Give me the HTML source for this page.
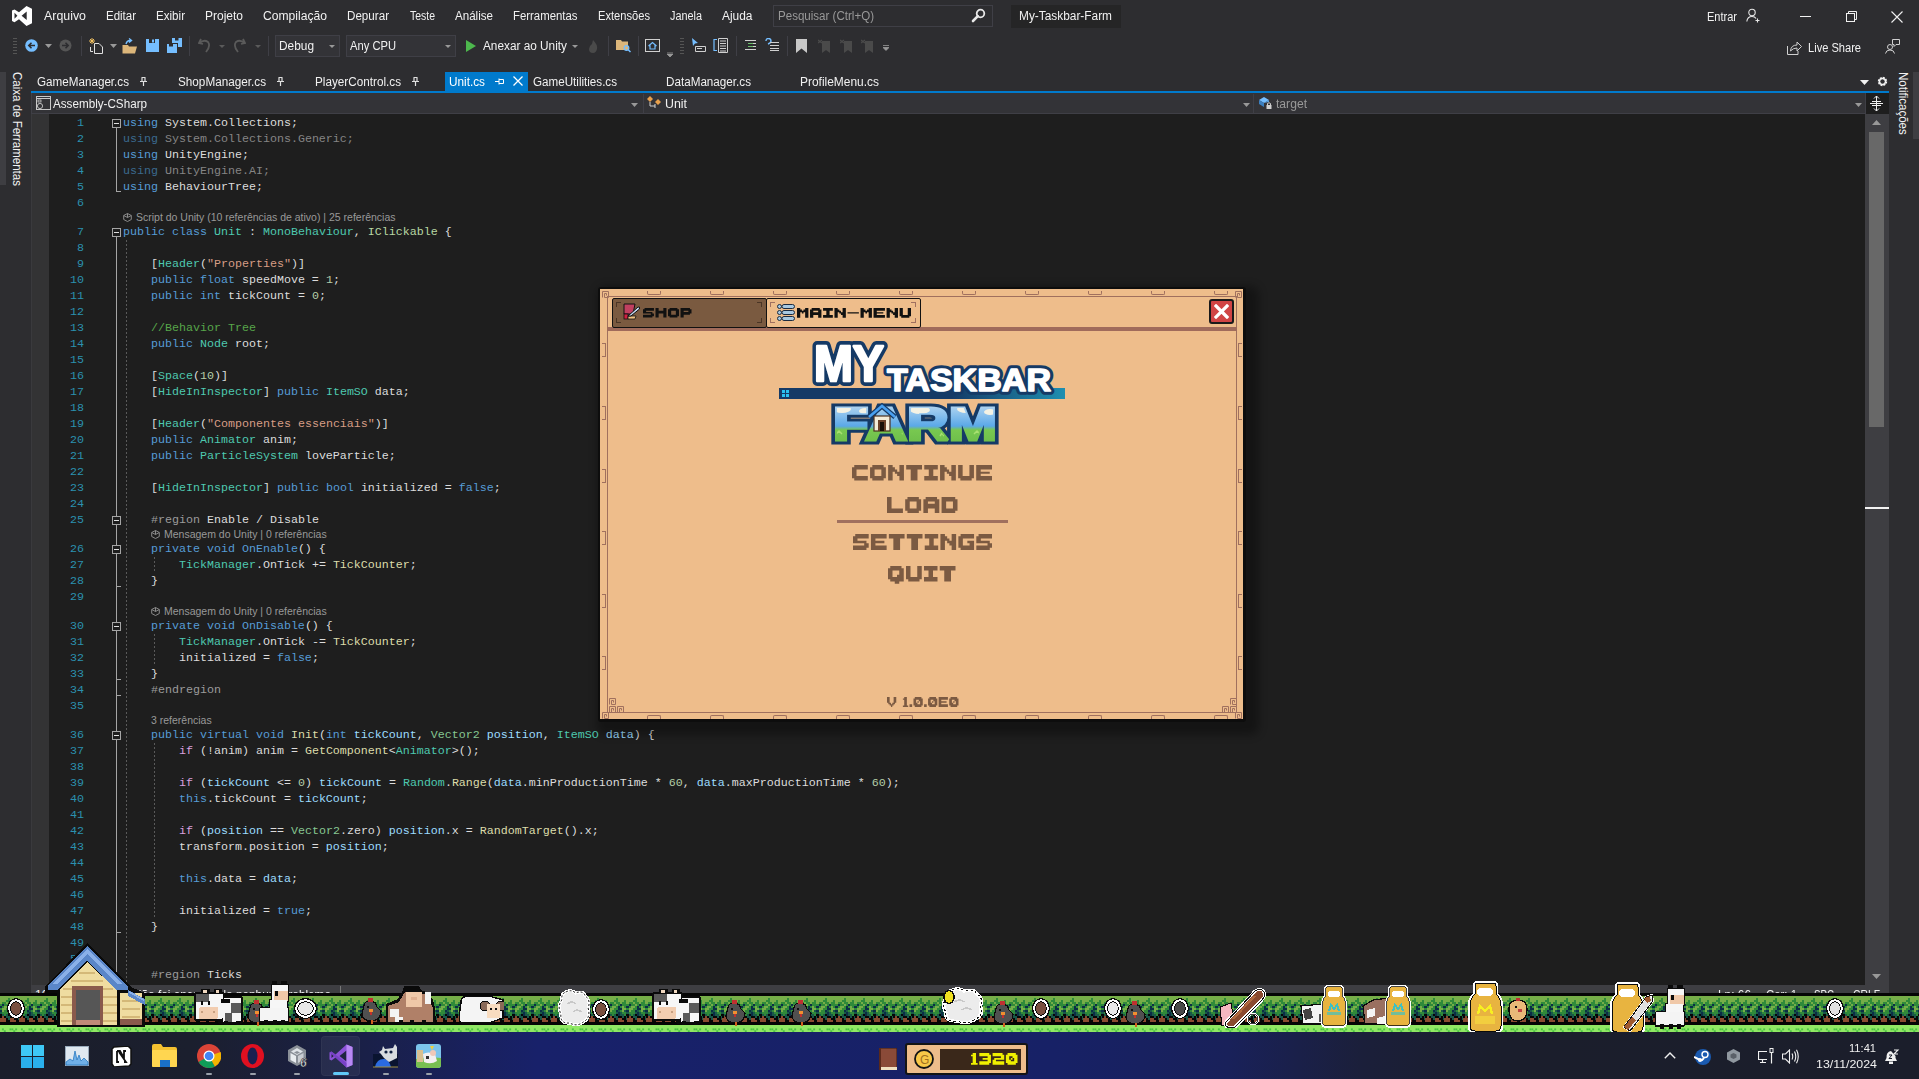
<!DOCTYPE html><html><head><meta charset="utf-8"><style>
*{margin:0;padding:0;box-sizing:border-box}
html,body{width:1919px;height:1079px;overflow:hidden;background:#2d2d30;font-family:"Liberation Sans",sans-serif;position:relative}
.abs{position:absolute}
.t{position:absolute;white-space:nowrap;font-family:"Liberation Sans",sans-serif}
.ln{position:absolute;left:49px;width:35px;text-align:right;color:#2b91af;font:11.67px/16px "Liberation Mono",monospace;height:16px}
.cl{position:absolute;left:123px;font:11.67px/16px "Liberation Mono",monospace;white-space:pre;height:16px}
</style></head><body>
<div class="abs" style="left:0px;top:0px;width:1919px;height:62px;background:#2d2d30;"></div>
<svg class="abs" style="left:0;top:0" width="40" height="32" viewBox="0 0 40 32"><path d="M26.5 6 L32 8.7 V23.3 L26.5 26 L19 19.3 L14.5 22.2 L12 21 V10.6 L14.5 9.4 L19 12.2 Z M14.5 12.8 V18.8 L17.4 15.8 Z M26.7 11.6 V20 L21.6 15.8 Z" fill="#fff" fill-rule="evenodd"/></svg>
<div class="t" style="left:44px;top:9.84px;font-size:12px;line-height:12px;color:#f1f1f1;transform:scaleX(1.0322);transform-origin:0 0;">Arquivo</div>
<div class="t" style="left:106px;top:9.84px;font-size:12px;line-height:12px;color:#f1f1f1;transform:scaleX(0.9570);transform-origin:0 0;">Editar</div>
<div class="t" style="left:156px;top:9.84px;font-size:12px;line-height:12px;color:#f1f1f1;transform:scaleX(0.9664);transform-origin:0 0;">Exibir</div>
<div class="t" style="left:205px;top:9.84px;font-size:12px;line-height:12px;color:#f1f1f1;transform:scaleX(0.9994);transform-origin:0 0;">Projeto</div>
<div class="t" style="left:263px;top:9.84px;font-size:12px;line-height:12px;color:#f1f1f1;transform:scaleX(1.0100);transform-origin:0 0;">Compilação</div>
<div class="t" style="left:347px;top:9.84px;font-size:12px;line-height:12px;color:#f1f1f1;transform:scaleX(0.9687);transform-origin:0 0;">Depurar</div>
<div class="t" style="left:410px;top:9.84px;font-size:12px;line-height:12px;color:#f1f1f1;transform:scaleX(0.8716);transform-origin:0 0;">Teste</div>
<div class="t" style="left:455px;top:9.84px;font-size:12px;line-height:12px;color:#f1f1f1;transform:scaleX(0.9655);transform-origin:0 0;">Análise</div>
<div class="t" style="left:513px;top:9.84px;font-size:12px;line-height:12px;color:#f1f1f1;transform:scaleX(0.9482);transform-origin:0 0;">Ferramentas</div>
<div class="t" style="left:598px;top:9.84px;font-size:12px;line-height:12px;color:#f1f1f1;transform:scaleX(0.9280);transform-origin:0 0;">Extensões</div>
<div class="t" style="left:670px;top:9.84px;font-size:12px;line-height:12px;color:#f1f1f1;transform:scaleX(0.9049);transform-origin:0 0;">Janela</div>
<div class="t" style="left:722px;top:9.84px;font-size:12px;line-height:12px;color:#f1f1f1;transform:scaleX(0.9937);transform-origin:0 0;">Ajuda</div>
<div class="abs" style="left:773px;top:5px;width:220px;height:22px;background:#2d2d30;border:1px solid #3f3f46;"></div>
<div class="t" style="left:778px;top:9.84px;font-size:12px;line-height:12px;color:#999999;transform:scaleX(0.9629);transform-origin:0 0;">Pesquisar (Ctrl+Q)</div>
<svg class="abs" style="left:971px;top:8px" width="15" height="15" viewBox="0 0 15 15"><circle cx="9.5" cy="5.5" r="3.8" fill="none" stroke="#e8e8e8" stroke-width="1.8"/><path d="M6.8 8.2 L2 13" stroke="#e8e8e8" stroke-width="2.6" stroke-linecap="round"/></svg>
<div class="abs" style="left:1011px;top:5px;width:110px;height:23px;background:#252526;"></div>
<div class="t" style="left:1019px;top:9.84px;font-size:12px;line-height:12px;color:#f1f1f1;transform:scaleX(0.9893);transform-origin:0 0;">My-Taskbar-Farm</div>
<div class="t" style="left:1707px;top:10.84px;font-size:12px;line-height:12px;color:#f1f1f1;transform:scaleX(0.9180);transform-origin:0 0;">Entrar</div>
<svg class="abs" style="left:1746px;top:8px" width="15" height="15" viewBox="0 0 15 15"><circle cx="6" cy="4.5" r="3.2" fill="none" stroke="#e8e8e8" stroke-width="1.1"/><path d="M0.8 13.5 Q1.5 8.5 6 8.5 Q9 8.5 10 10.5" fill="none" stroke="#e8e8e8" stroke-width="1.1"/><path d="M11.5 10.5 V14.5 M9.5 12.5 H13.5" stroke="#e8e8e8" stroke-width="1.1"/></svg>
<div class="abs" style="left:1800px;top:16px;width:11px;height:1px;background:#f1f1f1;"></div>
<svg class="abs" style="left:1846px;top:11px" width="12" height="12" viewBox="0 0 12 12"><rect x="0.5" y="2.5" width="8" height="8" fill="none" stroke="#f1f1f1"/><path d="M2.5 2.5 V0.5 H10.5 V8.5 H8.5" fill="none" stroke="#f1f1f1"/></svg>
<svg class="abs" style="left:1891px;top:11px" width="12" height="12" viewBox="0 0 12 12"><path d="M0.5 0.5 L11.5 11.5 M11.5 0.5 L0.5 11.5" stroke="#f1f1f1" stroke-width="1.1"/></svg>
<div class="abs" style="left:13px;top:37px;width:4px;height:17px;background-image:radial-gradient(#555 0.7px,transparent 0.8px);background-size:2px 3px"></div>
<svg class="abs" style="left:25px;top:39px" width="13" height="13" viewBox="0 0 13 13"><circle cx="6.5" cy="6.5" r="6.3" fill="#75beff"/><path d="M10 6.5 H4 M6.5 3.8 L3.8 6.5 L6.5 9.2" fill="none" stroke="#2d2d30" stroke-width="1.6"/></svg>
<svg class="abs" style="left:45px;top:44px" width="7" height="4"><path d="M0 0 H7 L3.5 4Z" fill="#999"/></svg>
<svg class="abs" style="left:59px;top:39px" width="13" height="13" viewBox="0 0 13 13"><circle cx="6.5" cy="6.5" r="6" fill="#555"/><path d="M3 6.5 H9 M6.5 3.8 L9.2 6.5 L6.5 9.2" fill="none" stroke="#2d2d30" stroke-width="1.6"/></svg>
<div class="abs" style="left:81px;top:36px;width:1px;height:20px;background:#3f3f46;"></div>
<svg class="abs" style="left:89px;top:38px" width="15" height="16" viewBox="0 0 15 16"><path d="M3 0 V6 M0 3 H6 M1 1 L5 5 M5 1 L1 5" stroke="#f0c060" stroke-width="1"/><path d="M5.5 5.5 H10 L13.5 9 V15.5 H5.5 Z" fill="none" stroke="#e0e0e0"/><path d="M1.5 9 V13.5 H4" fill="none" stroke="#e0e0e0"/></svg>
<svg class="abs" style="left:110px;top:44px" width="7" height="4"><path d="M0 0 H7 L3.5 4Z" fill="#999"/></svg>
<svg class="abs" style="left:122px;top:38px" width="16" height="16" viewBox="0 0 16 16"><path d="M0.5 7 H6 L7 8.5 H15 L13 15.5 H0.5 Z" fill="#dcb67a"/><path d="M4 6 Q5 2 9 2.5 M7 0.5 L9.5 2.5 L7 4.5" fill="none" stroke="#75beff" stroke-width="1.4"/></svg>
<svg class="abs" style="left:146px;top:39px" width="13" height="13" viewBox="0 0 13 13"><path d="M0 0 H13 V13 H0Z" fill="#75beff"/><rect x="3" y="0" width="6" height="4" fill="#2d2d30"/><rect x="6" y="0.5" width="2" height="3" fill="#75beff"/></svg>
<svg class="abs" style="left:167px;top:38px" width="15" height="15" viewBox="0 0 15 15"><path d="M5 0 H15 V9 H11 V5 H5Z" fill="#75beff"/><path d="M0 6 H10 V15 H0Z" fill="#75beff"/><rect x="2" y="6" width="4" height="2.5" fill="#2d2d30"/><rect x="8" y="0" width="3.5" height="2.5" fill="#2d2d30"/></svg>
<div class="abs" style="left:189px;top:36px;width:1px;height:20px;background:#3f3f46;"></div>
<svg class="abs" style="left:198px;top:38px" width="13" height="15" viewBox="0 0 13 15"><path d="M3 1 L1 5 L5 6 M1.5 5 Q6 1 10 4 Q13 8 8 14" fill="none" stroke="#5a5a5a" stroke-width="1.8"/></svg>
<svg class="abs" style="left:219px;top:45px" width="6" height="3"><path d="M0 0 H6 L3 3Z" fill="#5a5a5a"/></svg>
<svg class="abs" style="left:233px;top:38px" width="13" height="15" viewBox="0 0 13 15"><path d="M10 1 L12 5 L8 6 M11.5 5 Q7 1 3 4 Q0 8 5 14" fill="none" stroke="#5a5a5a" stroke-width="1.8"/></svg>
<svg class="abs" style="left:255px;top:45px" width="6" height="3"><path d="M0 0 H6 L3 3Z" fill="#5a5a5a"/></svg>
<div class="abs" style="left:268px;top:36px;width:1px;height:20px;background:#3f3f46;"></div>
<div class="abs" style="left:275px;top:35px;width:65px;height:22px;background:#333337;border:1px solid #3f3f46;"></div>
<div class="t" style="left:279px;top:39.84px;font-size:12px;line-height:12px;color:#f1f1f1;transform:scaleX(0.9897);transform-origin:0 0;">Debug</div>
<svg class="abs" style="left:329px;top:45px" width="6" height="3"><path d="M0 0 H6 L3 3Z" fill="#999"/></svg>
<div class="abs" style="left:346px;top:35px;width:110px;height:22px;background:#333337;border:1px solid #3f3f46;"></div>
<div class="t" style="left:350px;top:39.84px;font-size:12px;line-height:12px;color:#f1f1f1;transform:scaleX(0.9321);transform-origin:0 0;">Any CPU</div>
<svg class="abs" style="left:445px;top:45px" width="6" height="3"><path d="M0 0 H6 L3 3Z" fill="#999"/></svg>
<svg class="abs" style="left:466px;top:40px" width="10" height="12"><path d="M0 0 L10 6 L0 12Z" fill="#4db84d"/></svg>
<div class="t" style="left:483px;top:39.84px;font-size:12px;line-height:12px;color:#f1f1f1;transform:scaleX(0.9838);transform-origin:0 0;">Anexar ao Unity</div>
<svg class="abs" style="left:572px;top:45px" width="6" height="3"><path d="M0 0 H6 L3 3Z" fill="#999"/></svg>
<svg class="abs" style="left:588px;top:40px" width="10" height="13"><path d="M5 0 Q10 5 9 9 Q8 13 5 13 Q1 13 1 9 Q1 6 4 4Z" fill="#4a4a4a"/></svg>
<div class="abs" style="left:608px;top:36px;width:1px;height:20px;background:#3f3f46;"></div>
<svg class="abs" style="left:616px;top:39px" width="15" height="14" viewBox="0 0 15 14"><path d="M0 1 H5 L6 2.5 H12 V11 H0Z" fill="#dcb67a"/><circle cx="10.5" cy="9" r="2.3" fill="none" stroke="#75beff" stroke-width="1.3"/><path d="M12 10.5 L14.5 13" stroke="#75beff" stroke-width="1.5"/></svg>
<div class="abs" style="left:638px;top:36px;width:1px;height:20px;background:#3f3f46;"></div>
<svg class="abs" style="left:645px;top:39px" width="15" height="13" viewBox="0 0 15 13"><rect x="0.5" y="0.5" width="14" height="12" fill="none" stroke="#d0d0d0"/><path d="M3.5 7 L7.5 3.5 L11.5 7 M5 6 V10 H10 V6" fill="none" stroke="#75beff" stroke-width="1.2"/></svg>
<svg class="abs" style="left:667px;top:52px" width="6" height="5"><path d="M0 0 H6 M0 2 H6 L3 5Z" stroke="#999" fill="#999" stroke-width="0.8"/></svg>
<div class="abs" style="left:680px;top:37px;width:4px;height:17px;background-image:radial-gradient(#555 0.7px,transparent 0.8px);background-size:2px 3px"></div>
<svg class="abs" style="left:692px;top:38px" width="14" height="15" viewBox="0 0 14 15"><path d="M0 0 L6 5 L3 5.5 L1 8Z" fill="#75beff"/><path d="M3.5 8.5 H13.5 V13.5 H3.5 Z M5 10.5 H10" fill="none" stroke="#d0d0d0"/></svg>
<svg class="abs" style="left:713px;top:38px" width="15" height="15" viewBox="0 0 15 15"><path d="M4 1.5 H1 V12.5 H4" fill="none" stroke="#75beff" stroke-width="1.2"/><path d="M5.5 0.5 H14.5 V14.5 H5.5Z M7 3 H13 M7 5.5 H13 M7 8 H13 M7 10.5 H13 M7 13 H13" fill="none" stroke="#d0d0d0" stroke-width="1"/></svg>
<div class="abs" style="left:736px;top:36px;width:1px;height:20px;background:#3f3f46;"></div>
<svg class="abs" style="left:745px;top:40px" width="11" height="11" viewBox="0 0 11 11"><path d="M0 0.5 H11 M3 3.5 H11 M3 6.5 H11 M0 9.5 H11" stroke="#d0d0d0"/><path d="M3 3.5 H8 M3 6.5 H8" stroke="#6cc06c"/></svg>
<svg class="abs" style="left:765px;top:38px" width="14" height="13" viewBox="0 0 14 13"><path d="M1 3 Q1 0.5 3.5 0.5 Q6 0.5 6 3 Q6 5 3 6" fill="none" stroke="#75beff" stroke-width="1.4"/><path d="M5 4.5 H14 M5 7.5 H14 M5 10.5 H14 M5 12.5 H14" stroke="#d0d0d0"/></svg>
<div class="abs" style="left:787px;top:36px;width:1px;height:20px;background:#3f3f46;"></div>
<svg class="abs" style="left:796px;top:39px" width="11" height="14"><path d="M0 0 H11 V14 L5.5 9.5 L0 14Z" fill="#c8c8c8"/></svg>
<svg class="abs" style="left:818px;top:38px" width="12" height="15"><path d="M4 3 H12 V15 L8 12 L4 15Z" fill="#4a4a4a"/><path d="M0 2 L4 5 M0 5 L4 2" stroke="#4a4a4a" stroke-width="1.4"/></svg>
<svg class="abs" style="left:840px;top:38px" width="12" height="15"><path d="M4 3 H12 V15 L8 12 L4 15Z" fill="#4a4a4a"/><path d="M0 2 L4 5 M0 5 L4 2" stroke="#4a4a4a" stroke-width="1.4"/></svg>
<svg class="abs" style="left:861px;top:38px" width="12" height="15"><path d="M4 3 H12 V15 L8 12 L4 15Z" fill="#4a4a4a"/><path d="M0 2 L4 5 M0 5 L4 2" stroke="#4a4a4a" stroke-width="1.4"/></svg>
<svg class="abs" style="left:883px;top:45px" width="6" height="6"><path d="M0 0.5 H6 M0 2.5 H6 L3 5.5Z" stroke="#999" fill="#999" stroke-width="0.8"/></svg>
<svg class="abs" style="left:1787px;top:41px" width="15" height="14" viewBox="0 0 15 14"><path d="M0.5 5 V13.5 H11 V10" fill="none" stroke="#d0d0d0"/><path d="M3.5 10 Q4 4 10 4 V1 L14.5 5.5 L10 10 V7 Q6 7 3.5 10Z" fill="none" stroke="#d0d0d0"/></svg>
<div class="t" style="left:1808px;top:41.84px;font-size:12px;line-height:12px;color:#f1f1f1;transform:scaleX(0.9238);transform-origin:0 0;">Live Share</div>
<svg class="abs" style="left:1885px;top:39px" width="15" height="15" viewBox="0 0 15 15"><circle cx="5" cy="8" r="2.5" fill="none" stroke="#d0d0d0"/><path d="M0.5 14.5 Q1 11 5 11 Q9 11 9.5 14.5" fill="none" stroke="#d0d0d0"/><path d="M7.5 0.5 H14.5 V5.5 H11 L9 7.5 V5.5 H7.5Z" fill="none" stroke="#d0d0d0"/></svg>
<div class="abs" style="left:0px;top:62px;width:31px;height:923px;background:#2d2d30;"></div>
<div class="abs" style="left:0px;top:72px;width:6px;height:113px;background:#3e3e42;"></div>
<div class="t" style="left:23px;top:72px;font-size:12px;line-height:12px;color:#f1f1f1;transform:rotate(90deg) scaleX(0.96);transform-origin:0 0;">Caixa de Ferramentas</div>
<div class="abs" style="left:1889px;top:62px;width:30px;height:923px;background:#2d2d30;"></div>
<div class="abs" style="left:1913px;top:72px;width:6px;height:67px;background:#3e3e42;"></div>
<div class="t" style="left:1909px;top:72px;font-size:12px;line-height:12px;color:#f1f1f1;transform:rotate(90deg) scaleX(0.96);transform-origin:0 0;">Notificações</div>
<div class="t" style="left:37px;top:75.84px;font-size:12px;line-height:12px;color:#f1f1f1;transform:scaleX(0.9713);transform-origin:0 0;">GameManager.cs</div>
<svg class="abs" style="left:140px;top:77px" width="7" height="9" viewBox="0 0 7 9"><path d="M1.5 0.5 H5.5 M2 0.5 V4.5 M5 0.5 V4.5 M0 4.5 H7 M3.5 4.5 V9" stroke="#e0e0e0" stroke-width="1.2" fill="none"/></svg>
<div class="t" style="left:178px;top:75.84px;font-size:12px;line-height:12px;color:#f1f1f1;transform:scaleX(0.9771);transform-origin:0 0;">ShopManager.cs</div>
<svg class="abs" style="left:277px;top:77px" width="7" height="9" viewBox="0 0 7 9"><path d="M1.5 0.5 H5.5 M2 0.5 V4.5 M5 0.5 V4.5 M0 4.5 H7 M3.5 4.5 V9" stroke="#e0e0e0" stroke-width="1.2" fill="none"/></svg>
<div class="t" style="left:315px;top:75.84px;font-size:12px;line-height:12px;color:#f1f1f1;transform:scaleX(0.9769);transform-origin:0 0;">PlayerControl.cs</div>
<svg class="abs" style="left:412px;top:77px" width="7" height="9" viewBox="0 0 7 9"><path d="M1.5 0.5 H5.5 M2 0.5 V4.5 M5 0.5 V4.5 M0 4.5 H7 M3.5 4.5 V9" stroke="#e0e0e0" stroke-width="1.2" fill="none"/></svg>
<div class="t" style="left:533px;top:75.84px;font-size:12px;line-height:12px;color:#f1f1f1;transform:scaleX(0.9690);transform-origin:0 0;">GameUtilities.cs</div>
<div class="t" style="left:666px;top:75.84px;font-size:12px;line-height:12px;color:#f1f1f1;transform:scaleX(0.9727);transform-origin:0 0;">DataManager.cs</div>
<div class="t" style="left:800px;top:75.84px;font-size:12px;line-height:12px;color:#f1f1f1;transform:scaleX(0.9954);transform-origin:0 0;">ProfileMenu.cs</div>
<div class="abs" style="left:445px;top:72px;width:83px;height:19px;background:#007acc;"></div>
<div class="t" style="left:449px;top:75.84px;font-size:12px;line-height:12px;color:#ffffff;transform:scaleX(0.9816);transform-origin:0 0;">Unit.cs</div>
<svg class="abs" style="left:495px;top:78px" width="9" height="7" viewBox="0 0 9 7"><path d="M0 3.5 H4 M4 0.5 V6.5 M4 1.5 H8.5 V5.5 H4" stroke="#fff" fill="none"/></svg>
<svg class="abs" style="left:513px;top:76px" width="10" height="10" viewBox="0 0 10 10"><path d="M0.5 0.5 L9.5 9.5 M9.5 0.5 L0.5 9.5" stroke="#fff" stroke-width="1.3"/></svg>
<svg class="abs" style="left:1860px;top:80px" width="9" height="5"><path d="M0 0 H9 L4.5 5Z" fill="#f1f1f1"/></svg>
<svg class="abs" style="left:1877px;top:76px" width="11" height="11" viewBox="0 0 11 11"><circle cx="5.5" cy="5.5" r="3.6" fill="none" stroke="#f1f1f1" stroke-width="2.2" stroke-dasharray="1.8 1"/><circle cx="5.5" cy="5.5" r="3" fill="none" stroke="#f1f1f1" stroke-width="1.4"/></svg>
<div class="abs" style="left:31px;top:91px;width:1858px;height:2px;background:#007acc;"></div>
<div class="abs" style="left:31px;top:93px;width:1835px;height:21px;background:#333337;border:1px solid #3f3f46;border-top:none;"></div>
<svg class="abs" style="left:36px;top:96px" width="15" height="14" viewBox="0 0 15 14"><rect x="0.5" y="0.5" width="14" height="13" fill="none" stroke="#c8c8c8"/><path d="M0.5 2.5 H14.5" stroke="#c8c8c8"/><rect x="2" y="4" width="3" height="2" fill="none" stroke="#c8c8c8" stroke-width="0.8"/><circle cx="4" cy="10" r="2.6" fill="#333337" stroke="#c8c8c8" stroke-width="0.9"/></svg>
<div class="t" style="left:53px;top:97.84px;font-size:12px;line-height:12px;color:#f1f1f1;transform:scaleX(0.9721);transform-origin:0 0;">Assembly-CSharp</div>
<svg class="abs" style="left:631px;top:103px" width="7" height="4"><path d="M0 0 H7 L3.5 4Z" fill="#999"/></svg>
<div class="abs" style="left:643px;top:94px;width:1px;height:19px;background:#3f3f46;"></div>
<svg class="abs" style="left:647px;top:96px" width="15" height="14" viewBox="0 0 15 14"><path d="M0 3 L3 0 L6 3 L3 6Z" fill="#e8a04c"/><path d="M3 6 V10 H8 M8 8 V12" stroke="#d0d0d0" fill="none"/><path d="M8 6 L11 3 L14 6 L11 9Z" fill="#e8a04c"/></svg>
<div class="t" style="left:665px;top:97.84px;font-size:12px;line-height:12px;color:#f1f1f1;transform:scaleX(1.0309);transform-origin:0 0;">Unit</div>
<svg class="abs" style="left:1243px;top:103px" width="7" height="4"><path d="M0 0 H7 L3.5 4Z" fill="#999"/></svg>
<div class="abs" style="left:1253px;top:94px;width:1px;height:19px;background:#3f3f46;"></div>
<svg class="abs" style="left:1258px;top:96px" width="14" height="14" viewBox="0 0 14 14"><path d="M1 4 L6 1 L11 4 L6 7Z" fill="#75beff"/><path d="M1 4 V8 L6 11 V7Z" fill="#3b7fc0"/><path d="M11 4 V6 L6 7Z" fill="#5aa0e0"/><rect x="8.5" y="9" width="5" height="4" fill="#d0d0d0"/><path d="M9.5 9 V7.5 Q11 6 12.5 7.5 V9" fill="none" stroke="#d0d0d0"/></svg>
<div class="t" style="left:1276px;top:97.84px;font-size:12px;line-height:12px;color:#999999;transform:scaleX(1.0102);transform-origin:0 0;">target</div>
<svg class="abs" style="left:1855px;top:103px" width="7" height="4"><path d="M0 0 H7 L3.5 4Z" fill="#999"/></svg>
<div class="abs" style="left:1866px;top:93px;width:23px;height:21px;background:#1e1e1e;"></div>
<svg class="abs" style="left:1870px;top:96px" width="13" height="15" viewBox="0 0 13 15"><path d="M0 7.5 H13 M6.5 0 V15 M4 2.5 L6.5 0 L9 2.5 M4 12.5 L6.5 15 L9 12.5 M2 5.5 H11 M2 9.5 H11" stroke="#f1f1f1" fill="none" stroke-width="1"/></svg>
<div class="abs" style="left:31px;top:114px;width:1835px;height:871px;background:#1e1e1e;"></div>
<div class="abs" style="left:31px;top:114px;width:18px;height:871px;background:#333334;"></div>
<div class="abs" style="left:31px;top:114px;width:1px;height:871px;background:#3a3a3d;"></div>
<div class="ln" style="top:115px">1</div>
<div class="cl" style="top:115px"><span style="color:#569cd6">using </span><span style="color:#dcdcdc">System.Collections;</span></div>
<div class="ln" style="top:131px">2</div>
<div class="cl" style="top:131px"><span style="color:#3b6a8e">using </span><span style="color:#858585">System.Collections.Generic;</span></div>
<div class="ln" style="top:147px">3</div>
<div class="cl" style="top:147px"><span style="color:#569cd6">using </span><span style="color:#dcdcdc">UnityEngine;</span></div>
<div class="ln" style="top:163px">4</div>
<div class="cl" style="top:163px"><span style="color:#3b6a8e">using </span><span style="color:#858585">UnityEngine.AI;</span></div>
<div class="ln" style="top:179px">5</div>
<div class="cl" style="top:179px"><span style="color:#569cd6">using </span><span style="color:#dcdcdc">BehaviourTree;</span></div>
<div class="ln" style="top:195px">6</div>
<svg class="abs" style="left:123px;top:213px" width="9" height="9" viewBox="0 0 9 9"><path d="M4.5 0.5 L8.3 2.5 V6.5 L4.5 8.5 L0.7 6.5 V2.5Z M4.5 0.5 V4.5 M0.7 2.5 L4.5 4.5 L8.3 2.5" fill="none" stroke="#8a8a8a" stroke-width="1"/></svg>
<div class="t" style="left:136px;top:212.11px;font-size:10.5px;line-height:10.5px;color:#999999;">Script do Unity (10 referências de ativo) | 25 referências</div>
<div class="ln" style="top:224px">7</div>
<div class="cl" style="top:224px"><span style="color:#569cd6">public class </span><span style="color:#4ec9b0">Unit</span><span style="color:#dcdcdc"> : </span><span style="color:#4ec9b0">MonoBehaviour</span><span style="color:#dcdcdc">, </span><span style="color:#b8d7a3">IClickable</span><span style="color:#dcdcdc"> {</span></div>
<div class="ln" style="top:240px">8</div>
<div class="ln" style="top:256px">9</div>
<div class="cl" style="top:256px"><span style="color:#dcdcdc">    [</span><span style="color:#4ec9b0">Header</span><span style="color:#dcdcdc">(</span><span style="color:#d69d85">&quot;Properties&quot;</span><span style="color:#dcdcdc">)]</span></div>
<div class="ln" style="top:272px">10</div>
<div class="cl" style="top:272px"><span style="color:#569cd6">    public float </span><span style="color:#dcdcdc">speedMove = </span><span style="color:#b5cea8">1</span><span style="color:#dcdcdc">;</span></div>
<div class="ln" style="top:288px">11</div>
<div class="cl" style="top:288px"><span style="color:#569cd6">    public int </span><span style="color:#dcdcdc">tickCount = </span><span style="color:#b5cea8">0</span><span style="color:#dcdcdc">;</span></div>
<div class="ln" style="top:304px">12</div>
<div class="ln" style="top:320px">13</div>
<div class="cl" style="top:320px"><span style="color:#57a64a">    //Behavior Tree</span></div>
<div class="ln" style="top:336px">14</div>
<div class="cl" style="top:336px"><span style="color:#569cd6">    public </span><span style="color:#4ec9b0">Node</span><span style="color:#dcdcdc"> root;</span></div>
<div class="ln" style="top:352px">15</div>
<div class="ln" style="top:368px">16</div>
<div class="cl" style="top:368px"><span style="color:#dcdcdc">    [</span><span style="color:#4ec9b0">Space</span><span style="color:#dcdcdc">(</span><span style="color:#b5cea8">10</span><span style="color:#dcdcdc">)]</span></div>
<div class="ln" style="top:384px">17</div>
<div class="cl" style="top:384px"><span style="color:#dcdcdc">    [</span><span style="color:#4ec9b0">HideInInspector</span><span style="color:#dcdcdc">] </span><span style="color:#569cd6">public </span><span style="color:#4ec9b0">ItemSO</span><span style="color:#dcdcdc"> data;</span></div>
<div class="ln" style="top:400px">18</div>
<div class="ln" style="top:416px">19</div>
<div class="cl" style="top:416px"><span style="color:#dcdcdc">    [</span><span style="color:#4ec9b0">Header</span><span style="color:#dcdcdc">(</span><span style="color:#d69d85">&quot;Componentes essenciais&quot;</span><span style="color:#dcdcdc">)]</span></div>
<div class="ln" style="top:432px">20</div>
<div class="cl" style="top:432px"><span style="color:#569cd6">    public </span><span style="color:#4ec9b0">Animator</span><span style="color:#dcdcdc"> anim;</span></div>
<div class="ln" style="top:448px">21</div>
<div class="cl" style="top:448px"><span style="color:#569cd6">    public </span><span style="color:#4ec9b0">ParticleSystem</span><span style="color:#dcdcdc"> loveParticle;</span></div>
<div class="ln" style="top:464px">22</div>
<div class="ln" style="top:480px">23</div>
<div class="cl" style="top:480px"><span style="color:#dcdcdc">    [</span><span style="color:#4ec9b0">HideInInspector</span><span style="color:#dcdcdc">] </span><span style="color:#569cd6">public bool </span><span style="color:#dcdcdc">initialized = </span><span style="color:#569cd6">false</span><span style="color:#dcdcdc">;</span></div>
<div class="ln" style="top:496px">24</div>
<div class="ln" style="top:512px">25</div>
<div class="cl" style="top:512px"><span style="color:#9b9b9b">    #region </span><span style="color:#dcdcdc">Enable / Disable</span></div>
<svg class="abs" style="left:151px;top:530px" width="9" height="9" viewBox="0 0 9 9"><path d="M4.5 0.5 L8.3 2.5 V6.5 L4.5 8.5 L0.7 6.5 V2.5Z M4.5 0.5 V4.5 M0.7 2.5 L4.5 4.5 L8.3 2.5" fill="none" stroke="#8a8a8a" stroke-width="1"/></svg>
<div class="t" style="left:164px;top:529.11px;font-size:10.5px;line-height:10.5px;color:#999999;">Mensagem do Unity | 0 referências</div>
<div class="ln" style="top:541px">26</div>
<div class="cl" style="top:541px"><span style="color:#569cd6">    private void OnEnable</span><span style="color:#dcdcdc">() {</span></div>
<div class="ln" style="top:557px">27</div>
<div class="cl" style="top:557px"><span style="color:#dcdcdc">        </span><span style="color:#4ec9b0">TickManager</span><span style="color:#dcdcdc">.OnTick += </span><span style="color:#dcdcaa">TickCounter</span><span style="color:#dcdcdc">;</span></div>
<div class="ln" style="top:573px">28</div>
<div class="cl" style="top:573px"><span style="color:#dcdcdc">    }</span></div>
<div class="ln" style="top:589px">29</div>
<svg class="abs" style="left:151px;top:607px" width="9" height="9" viewBox="0 0 9 9"><path d="M4.5 0.5 L8.3 2.5 V6.5 L4.5 8.5 L0.7 6.5 V2.5Z M4.5 0.5 V4.5 M0.7 2.5 L4.5 4.5 L8.3 2.5" fill="none" stroke="#8a8a8a" stroke-width="1"/></svg>
<div class="t" style="left:164px;top:606.11px;font-size:10.5px;line-height:10.5px;color:#999999;">Mensagem do Unity | 0 referências</div>
<div class="ln" style="top:618px">30</div>
<div class="cl" style="top:618px"><span style="color:#569cd6">    private void OnDisable</span><span style="color:#dcdcdc">() {</span></div>
<div class="ln" style="top:634px">31</div>
<div class="cl" style="top:634px"><span style="color:#dcdcdc">        </span><span style="color:#4ec9b0">TickManager</span><span style="color:#dcdcdc">.OnTick -= </span><span style="color:#dcdcaa">TickCounter</span><span style="color:#dcdcdc">;</span></div>
<div class="ln" style="top:650px">32</div>
<div class="cl" style="top:650px"><span style="color:#dcdcdc">        initialized = </span><span style="color:#569cd6">false</span><span style="color:#dcdcdc">;</span></div>
<div class="ln" style="top:666px">33</div>
<div class="cl" style="top:666px"><span style="color:#dcdcdc">    }</span></div>
<div class="ln" style="top:682px">34</div>
<div class="cl" style="top:682px"><span style="color:#9b9b9b">    #endregion</span></div>
<div class="ln" style="top:698px">35</div>
<div class="t" style="left:151px;top:715.11px;font-size:10.5px;line-height:10.5px;color:#999999;">3 referências</div>
<div class="ln" style="top:727px">36</div>
<div class="cl" style="top:727px"><span style="color:#569cd6">    public virtual void </span><span style="color:#dcdcaa">Init</span><span style="color:#dcdcdc">(</span><span style="color:#569cd6">int </span><span style="color:#9cdcfe">tickCount</span><span style="color:#dcdcdc">, </span><span style="color:#86c691">Vector2</span><span style="color:#dcdcdc"> </span><span style="color:#9cdcfe">position</span><span style="color:#dcdcdc">, </span><span style="color:#4ec9b0">ItemSO</span><span style="color:#dcdcdc"> </span><span style="color:#9cdcfe">data</span><span style="color:#dcdcdc">) {</span></div>
<div class="ln" style="top:743px">37</div>
<div class="cl" style="top:743px"><span style="color:#dcdcdc">        </span><span style="color:#d8a0df">if</span><span style="color:#dcdcdc"> (!anim) anim = </span><span style="color:#dcdcaa">GetComponent</span><span style="color:#dcdcdc">&lt;</span><span style="color:#4ec9b0">Animator</span><span style="color:#dcdcdc">&gt;();</span></div>
<div class="ln" style="top:759px">38</div>
<div class="ln" style="top:775px">39</div>
<div class="cl" style="top:775px"><span style="color:#dcdcdc">        </span><span style="color:#d8a0df">if</span><span style="color:#dcdcdc"> (</span><span style="color:#9cdcfe">tickCount</span><span style="color:#dcdcdc"> &lt;= </span><span style="color:#b5cea8">0</span><span style="color:#dcdcdc">) </span><span style="color:#9cdcfe">tickCount</span><span style="color:#dcdcdc"> = </span><span style="color:#4ec9b0">Random</span><span style="color:#dcdcdc">.</span><span style="color:#dcdcaa">Range</span><span style="color:#dcdcdc">(</span><span style="color:#9cdcfe">data</span><span style="color:#dcdcdc">.minProductionTime * </span><span style="color:#b5cea8">60</span><span style="color:#dcdcdc">, </span><span style="color:#9cdcfe">data</span><span style="color:#dcdcdc">.maxProductionTime * </span><span style="color:#b5cea8">60</span><span style="color:#dcdcdc">);</span></div>
<div class="ln" style="top:791px">40</div>
<div class="cl" style="top:791px"><span style="color:#dcdcdc">        </span><span style="color:#569cd6">this</span><span style="color:#dcdcdc">.tickCount = </span><span style="color:#9cdcfe">tickCount</span><span style="color:#dcdcdc">;</span></div>
<div class="ln" style="top:807px">41</div>
<div class="ln" style="top:823px">42</div>
<div class="cl" style="top:823px"><span style="color:#dcdcdc">        </span><span style="color:#d8a0df">if</span><span style="color:#dcdcdc"> (</span><span style="color:#9cdcfe">position</span><span style="color:#dcdcdc"> == </span><span style="color:#86c691">Vector2</span><span style="color:#dcdcdc">.zero) </span><span style="color:#9cdcfe">position</span><span style="color:#dcdcdc">.x = </span><span style="color:#dcdcaa">RandomTarget</span><span style="color:#dcdcdc">().x;</span></div>
<div class="ln" style="top:839px">43</div>
<div class="cl" style="top:839px"><span style="color:#dcdcdc">        transform.position = </span><span style="color:#9cdcfe">position</span><span style="color:#dcdcdc">;</span></div>
<div class="ln" style="top:855px">44</div>
<div class="ln" style="top:871px">45</div>
<div class="cl" style="top:871px"><span style="color:#dcdcdc">        </span><span style="color:#569cd6">this</span><span style="color:#dcdcdc">.data = </span><span style="color:#9cdcfe">data</span><span style="color:#dcdcdc">;</span></div>
<div class="ln" style="top:887px">46</div>
<div class="ln" style="top:903px">47</div>
<div class="cl" style="top:903px"><span style="color:#dcdcdc">        initialized = </span><span style="color:#569cd6">true</span><span style="color:#dcdcdc">;</span></div>
<div class="ln" style="top:919px">48</div>
<div class="cl" style="top:919px"><span style="color:#dcdcdc">    }</span></div>
<div class="ln" style="top:935px">49</div>
<div class="ln" style="top:951px">50</div>
<div class="ln" style="top:967px">51</div>
<div class="cl" style="top:967px"><span style="color:#9b9b9b">    #region </span><span style="color:#dcdcdc">Ticks</span></div>
<div class="abs" style="left:116px;top:128px;width:1px;height:63px;background:#a5a5a5;"></div>
<div class="abs" style="left:116px;top:191px;width:5px;height:1px;background:#a5a5a5;"></div>
<div class="abs" style="left:116px;top:237px;width:1px;height:748px;background:#a5a5a5;"></div>
<div class="abs" style="left:117px;top:586px;width:4px;height:1px;background:#a5a5a5;"></div>
<div class="abs" style="left:117px;top:679px;width:4px;height:1px;background:#a5a5a5;"></div>
<div class="abs" style="left:117px;top:695px;width:4px;height:1px;background:#a5a5a5;"></div>
<div class="abs" style="left:117px;top:932px;width:4px;height:1px;background:#a5a5a5;"></div>
<div class="abs" style="left:112px;top:119px;width:9px;height:9px;border:1px solid #a5a5a5;background:#1e1e1e"></div><div class="abs" style="left:114px;top:123px;width:5px;height:1px;background:#e0e0e0"></div>
<div class="abs" style="left:112px;top:228px;width:9px;height:9px;border:1px solid #a5a5a5;background:#1e1e1e"></div><div class="abs" style="left:114px;top:232px;width:5px;height:1px;background:#e0e0e0"></div>
<div class="abs" style="left:112px;top:516px;width:9px;height:9px;border:1px solid #a5a5a5;background:#1e1e1e"></div><div class="abs" style="left:114px;top:520px;width:5px;height:1px;background:#e0e0e0"></div>
<div class="abs" style="left:112px;top:545px;width:9px;height:9px;border:1px solid #a5a5a5;background:#1e1e1e"></div><div class="abs" style="left:114px;top:549px;width:5px;height:1px;background:#e0e0e0"></div>
<div class="abs" style="left:112px;top:622px;width:9px;height:9px;border:1px solid #a5a5a5;background:#1e1e1e"></div><div class="abs" style="left:114px;top:626px;width:5px;height:1px;background:#e0e0e0"></div>
<div class="abs" style="left:112px;top:731px;width:9px;height:9px;border:1px solid #a5a5a5;background:#1e1e1e"></div><div class="abs" style="left:114px;top:735px;width:5px;height:1px;background:#e0e0e0"></div>
<div class="abs" style="left:126px;top:240px;width:1px;height:745px;background:repeating-linear-gradient(to bottom,#5a5a5a 0 2px,transparent 2px 4px)"></div>
<div class="abs" style="left:154px;top:557px;width:1px;height:16px;background:repeating-linear-gradient(to bottom,#5a5a5a 0 2px,transparent 2px 4px)"></div>
<div class="abs" style="left:154px;top:634px;width:1px;height:32px;background:repeating-linear-gradient(to bottom,#5a5a5a 0 2px,transparent 2px 4px)"></div>
<div class="abs" style="left:154px;top:743px;width:1px;height:176px;background:repeating-linear-gradient(to bottom,#5a5a5a 0 2px,transparent 2px 4px)"></div>
<div class="abs" style="left:1865px;top:114px;width:24px;height:871px;background:#3e3e42;"></div>
<svg class="abs" style="left:1872px;top:120px" width="9" height="5"><path d="M0 5 L4.5 0 L9 5Z" fill="#999"/></svg>
<div class="abs" style="left:1869px;top:132px;width:15px;height:295px;background:#686868;"></div>
<div class="abs" style="left:1865px;top:507px;width:24px;height:2px;background:#f1f1f1;"></div>
<svg class="abs" style="left:1872px;top:974px" width="9" height="5"><path d="M0 0 L4.5 5 L9 0Z" fill="#999"/></svg>
<div class="abs" style="left:31px;top:985px;width:1858px;height:12px;background:#3e3e42;"></div>
<div class="t" style="left:35px;top:989.34px;font-size:12px;line-height:12px;color:#f1f1f1;">10</div>
<div class="t" style="left:133px;top:989.34px;font-size:12px;line-height:12px;color:#f1f1f1;transform:scaleX(0.9828);transform-origin:0 0;">Não foi encontrado nenhum problema</div>
<div class="abs" style="left:340px;top:986px;width:1px;height:8px;background:#777;"></div>
<div class="t" style="left:1718px;top:989.34px;font-size:12px;line-height:12px;color:#f1f1f1;transform:scaleX(0.9891);transform-origin:0 0;">Ln: 66</div>
<div class="t" style="left:1766px;top:989.34px;font-size:12px;line-height:12px;color:#f1f1f1;transform:scaleX(0.9486);transform-origin:0 0;">Car: 1</div>
<div class="t" style="left:1814px;top:989.34px;font-size:12px;line-height:12px;color:#f1f1f1;transform:scaleX(0.8105);transform-origin:0 0;">SPC</div>
<div class="t" style="left:1853px;top:989.34px;font-size:12px;line-height:12px;color:#f1f1f1;transform:scaleX(0.8616);transform-origin:0 0;">CRLF</div>
<div class="abs" style="left:598px;top:287px;width:648px;height:435px;background:#0d0d0d;border-radius:3px;box-shadow:6px 6px 9px 7px rgba(0,0,0,0.32);"></div>
<div class="abs" style="left:600px;top:289px;width:643px;height:430px;background:#eebd8b;"></div>
<div class="abs" style="left:607px;top:296px;width:630px;height:417px;background:transparent;border:1px solid #a0705e;"></div>
<svg class="abs" style="left:602px;top:291px" width="7" height="7" viewBox="0 0 7 7"><path d="M0.5 6.5 V0.5 H6.5 V6.5 H2.5 V2.5 H4.5 V4.5" fill="none" stroke="#a0705e" stroke-width="1"/></svg>
<svg class="abs" style="left:1235px;top:291px" width="7" height="7" viewBox="0 0 7 7"><path d="M0.5 6.5 V0.5 H6.5 V6.5 H2.5 V2.5 H4.5 V4.5" fill="none" stroke="#a0705e" stroke-width="1"/></svg>
<svg class="abs" style="left:602px;top:712px" width="7" height="7" viewBox="0 0 7 7"><path d="M0.5 6.5 V0.5 H6.5 V6.5 H2.5 V2.5 H4.5 V4.5" fill="none" stroke="#a0705e" stroke-width="1"/></svg>
<svg class="abs" style="left:1235px;top:712px" width="7" height="7" viewBox="0 0 7 7"><path d="M0.5 6.5 V0.5 H6.5 V6.5 H2.5 V2.5 H4.5 V4.5" fill="none" stroke="#a0705e" stroke-width="1"/></svg>
<svg class="abs" style="left:1230px;top:698px" width="7" height="7" viewBox="0 0 7 7"><path d="M0.5 6.5 V0.5 H6.5 V6.5 H2.5 V2.5 H4.5 V4.5" fill="none" stroke="#a0705e" stroke-width="1"/></svg>
<svg class="abs" style="left:1222px;top:706px" width="7" height="7" viewBox="0 0 7 7"><path d="M0.5 6.5 V0.5 H6.5 V6.5 H2.5 V2.5 H4.5 V4.5" fill="none" stroke="#a0705e" stroke-width="1"/></svg>
<svg class="abs" style="left:1230px;top:706px" width="7" height="7" viewBox="0 0 7 7"><path d="M0.5 6.5 V0.5 H6.5 V6.5 H2.5 V2.5 H4.5 V4.5" fill="none" stroke="#a0705e" stroke-width="1"/></svg>
<svg class="abs" style="left:609px;top:698px" width="7" height="7" viewBox="0 0 7 7"><path d="M0.5 6.5 V0.5 H6.5 V6.5 H2.5 V2.5 H4.5 V4.5" fill="none" stroke="#a0705e" stroke-width="1"/></svg>
<svg class="abs" style="left:617px;top:706px" width="7" height="7" viewBox="0 0 7 7"><path d="M0.5 6.5 V0.5 H6.5 V6.5 H2.5 V2.5 H4.5 V4.5" fill="none" stroke="#a0705e" stroke-width="1"/></svg>
<svg class="abs" style="left:609px;top:706px" width="7" height="7" viewBox="0 0 7 7"><path d="M0.5 6.5 V0.5 H6.5 V6.5 H2.5 V2.5 H4.5 V4.5" fill="none" stroke="#a0705e" stroke-width="1"/></svg>
<div class="abs" style="left:647px;top:291px;width:14px;height:4px;background:transparent;border:1px solid #a0705e;border-top:none;border-radius:0 0 2px 2px;"></div>
<div class="abs" style="left:647px;top:715px;width:14px;height:4px;background:transparent;border:1px solid #a0705e;border-bottom:none;border-radius:2px 2px 0 0;"></div>
<div class="abs" style="left:710px;top:291px;width:14px;height:4px;background:transparent;border:1px solid #a0705e;border-top:none;border-radius:0 0 2px 2px;"></div>
<div class="abs" style="left:710px;top:715px;width:14px;height:4px;background:transparent;border:1px solid #a0705e;border-bottom:none;border-radius:2px 2px 0 0;"></div>
<div class="abs" style="left:773px;top:291px;width:14px;height:4px;background:transparent;border:1px solid #a0705e;border-top:none;border-radius:0 0 2px 2px;"></div>
<div class="abs" style="left:773px;top:715px;width:14px;height:4px;background:transparent;border:1px solid #a0705e;border-bottom:none;border-radius:2px 2px 0 0;"></div>
<div class="abs" style="left:836px;top:291px;width:14px;height:4px;background:transparent;border:1px solid #a0705e;border-top:none;border-radius:0 0 2px 2px;"></div>
<div class="abs" style="left:836px;top:715px;width:14px;height:4px;background:transparent;border:1px solid #a0705e;border-bottom:none;border-radius:2px 2px 0 0;"></div>
<div class="abs" style="left:899px;top:291px;width:14px;height:4px;background:transparent;border:1px solid #a0705e;border-top:none;border-radius:0 0 2px 2px;"></div>
<div class="abs" style="left:899px;top:715px;width:14px;height:4px;background:transparent;border:1px solid #a0705e;border-bottom:none;border-radius:2px 2px 0 0;"></div>
<div class="abs" style="left:962px;top:291px;width:14px;height:4px;background:transparent;border:1px solid #a0705e;border-top:none;border-radius:0 0 2px 2px;"></div>
<div class="abs" style="left:962px;top:715px;width:14px;height:4px;background:transparent;border:1px solid #a0705e;border-bottom:none;border-radius:2px 2px 0 0;"></div>
<div class="abs" style="left:1025px;top:291px;width:14px;height:4px;background:transparent;border:1px solid #a0705e;border-top:none;border-radius:0 0 2px 2px;"></div>
<div class="abs" style="left:1025px;top:715px;width:14px;height:4px;background:transparent;border:1px solid #a0705e;border-bottom:none;border-radius:2px 2px 0 0;"></div>
<div class="abs" style="left:1088px;top:291px;width:14px;height:4px;background:transparent;border:1px solid #a0705e;border-top:none;border-radius:0 0 2px 2px;"></div>
<div class="abs" style="left:1088px;top:715px;width:14px;height:4px;background:transparent;border:1px solid #a0705e;border-bottom:none;border-radius:2px 2px 0 0;"></div>
<div class="abs" style="left:1151px;top:291px;width:14px;height:4px;background:transparent;border:1px solid #a0705e;border-top:none;border-radius:0 0 2px 2px;"></div>
<div class="abs" style="left:1151px;top:715px;width:14px;height:4px;background:transparent;border:1px solid #a0705e;border-bottom:none;border-radius:2px 2px 0 0;"></div>
<div class="abs" style="left:1214px;top:291px;width:14px;height:4px;background:transparent;border:1px solid #a0705e;border-top:none;border-radius:0 0 2px 2px;"></div>
<div class="abs" style="left:1214px;top:715px;width:14px;height:4px;background:transparent;border:1px solid #a0705e;border-bottom:none;border-radius:2px 2px 0 0;"></div>
<div class="abs" style="left:602px;top:343px;width:4px;height:14px;background:transparent;border:1px solid #a0705e;border-left:none;"></div>
<div class="abs" style="left:1238px;top:343px;width:4px;height:14px;background:transparent;border:1px solid #a0705e;border-right:none;"></div>
<div class="abs" style="left:602px;top:406px;width:4px;height:14px;background:transparent;border:1px solid #a0705e;border-left:none;"></div>
<div class="abs" style="left:1238px;top:406px;width:4px;height:14px;background:transparent;border:1px solid #a0705e;border-right:none;"></div>
<div class="abs" style="left:602px;top:469px;width:4px;height:14px;background:transparent;border:1px solid #a0705e;border-left:none;"></div>
<div class="abs" style="left:1238px;top:469px;width:4px;height:14px;background:transparent;border:1px solid #a0705e;border-right:none;"></div>
<div class="abs" style="left:602px;top:531px;width:4px;height:14px;background:transparent;border:1px solid #a0705e;border-left:none;"></div>
<div class="abs" style="left:1238px;top:531px;width:4px;height:14px;background:transparent;border:1px solid #a0705e;border-right:none;"></div>
<div class="abs" style="left:602px;top:594px;width:4px;height:14px;background:transparent;border:1px solid #a0705e;border-left:none;"></div>
<div class="abs" style="left:1238px;top:594px;width:4px;height:14px;background:transparent;border:1px solid #a0705e;border-right:none;"></div>
<div class="abs" style="left:602px;top:656px;width:4px;height:14px;background:transparent;border:1px solid #a0705e;border-left:none;"></div>
<div class="abs" style="left:1238px;top:656px;width:4px;height:14px;background:transparent;border:1px solid #a0705e;border-right:none;"></div>
<div class="abs" style="left:607px;top:327px;width:630px;height:4px;background:#a06b5b;"></div>
<div class="abs" style="left:612px;top:298px;width:155px;height:30px;background:#7a5a40;border:1px solid #111;border-radius:2px;"></div>
<div class="abs" style="left:766px;top:298px;width:155px;height:30px;background:#eebd8b;border:1px solid #111;border-radius:2px;"></div>
<div class="abs" style="left:616px;top:302px;width:5px;height:5px;border-top:1px dashed;border-left:1px dashed;border-color:#4a3525"></div>
<div class="abs" style="left:757px;top:302px;width:5px;height:5px;border-top:1px dashed;border-right:1px dashed;border-color:#4a3525"></div>
<div class="abs" style="left:616px;top:318px;width:5px;height:5px;border-bottom:1px dashed;border-left:1px dashed;border-color:#4a3525"></div>
<div class="abs" style="left:757px;top:318px;width:5px;height:5px;border-bottom:1px dashed;border-right:1px dashed;border-color:#4a3525"></div>
<div class="abs" style="left:770px;top:302px;width:5px;height:5px;border-top:1px dashed;border-left:1px dashed;border-color:#a07060"></div>
<div class="abs" style="left:911px;top:302px;width:5px;height:5px;border-top:1px dashed;border-right:1px dashed;border-color:#a07060"></div>
<div class="abs" style="left:770px;top:318px;width:5px;height:5px;border-bottom:1px dashed;border-left:1px dashed;border-color:#a07060"></div>
<div class="abs" style="left:911px;top:318px;width:5px;height:5px;border-bottom:1px dashed;border-right:1px dashed;border-color:#a07060"></div>
<svg class="abs" style="left:623px;top:303px" width="18" height="17" viewBox="0 0 18 17"><path d="M1 1 H12 L10 11 H1Z" fill="#c04060" stroke="#111" stroke-width="1"/><rect x="1" y="11" width="4" height="5" fill="#d02040" stroke="#111" stroke-width="0.8"/><path d="M5 13 H13 L12 16 H5Z" fill="#f0c080" stroke="#111" stroke-width="0.8"/><path d="M5 13 L15 4 Q17 3 16.5 6 L8 13Z" fill="#c0d8f0" stroke="#111" stroke-width="1"/></svg>
<svg class="abs" style="left:643px;top:308px;overflow:visible" width="48.50" height="9.50" viewBox="0 0 31 7" preserveAspectRatio="none"><path d="M1 0h6v1h-6zM0 1h7v1h-7zM0 2h2v1h-2zM0 3h6v1h-6zM5 4h2v1h-2zM0 5h7v1h-7zM0 6h6v1h-6zM8 0h2v1h-2zM13 0h2v1h-2zM8 1h2v1h-2zM13 1h2v1h-2zM8 2h7v1h-7zM8 3h7v1h-7zM8 4h2v1h-2zM13 4h2v1h-2zM8 5h2v1h-2zM13 5h2v1h-2zM8 6h2v1h-2zM13 6h2v1h-2zM17 0h5v1h-5zM16 1h7v1h-7zM16 2h2v1h-2zM21 2h2v1h-2zM16 3h2v1h-2zM21 3h2v1h-2zM16 4h2v1h-2zM21 4h2v1h-2zM16 5h7v1h-7zM17 6h5v1h-5zM24 0h6v1h-6zM24 1h7v1h-7zM24 2h2v1h-2zM29 2h2v1h-2zM24 3h7v1h-7zM24 4h6v1h-6zM24 5h2v1h-2zM24 6h2v1h-2z" fill="#111111"/></svg>
<svg class="abs" style="left:777px;top:304px" width="18" height="17" viewBox="0 0 18 17"><g fill="#a8c8e0" stroke="#1a2a40" stroke-width="1"><circle cx="2.5" cy="2.5" r="2"/><circle cx="2.5" cy="8.5" r="2"/><circle cx="2.5" cy="14.5" r="2"/><rect x="5" y="0.5" width="12.5" height="4" rx="2"/><rect x="5" y="6.5" width="12.5" height="4" rx="2"/><rect x="5" y="12.5" width="12.5" height="4" rx="2"/></g></svg>
<svg class="abs" style="left:797px;top:308px;overflow:visible" width="114.00" height="9.70" viewBox="0 0 70 7" preserveAspectRatio="none"><path d="M0 0h2v1h-2zM5 0h2v1h-2zM0 1h3v1h-3zM4 1h3v1h-3zM0 2h7v1h-7zM0 3h2v1h-2zM3 3h1v1h-1zM5 3h2v1h-2zM0 4h2v1h-2zM5 4h2v1h-2zM0 5h2v1h-2zM5 5h2v1h-2zM0 6h2v1h-2zM5 6h2v1h-2zM9 0h5v1h-5zM8 1h7v1h-7zM8 2h2v1h-2zM13 2h2v1h-2zM8 3h7v1h-7zM8 4h7v1h-7zM8 5h2v1h-2zM13 5h2v1h-2zM8 6h2v1h-2zM13 6h2v1h-2zM16 0h6v1h-6zM16 1h6v1h-6zM18 2h2v1h-2zM18 3h2v1h-2zM18 4h2v1h-2zM16 5h6v1h-6zM16 6h6v1h-6zM23 0h2v1h-2zM28 0h2v1h-2zM23 1h3v1h-3zM28 1h2v1h-2zM23 2h4v1h-4zM28 2h2v1h-2zM23 3h2v1h-2zM26 3h4v1h-4zM23 4h2v1h-2zM27 4h3v1h-3zM23 5h2v1h-2zM28 5h2v1h-2zM23 6h2v1h-2zM28 6h2v1h-2zM31 3h7v1h-7zM39 0h2v1h-2zM44 0h2v1h-2zM39 1h3v1h-3zM43 1h3v1h-3zM39 2h7v1h-7zM39 3h2v1h-2zM42 3h1v1h-1zM44 3h2v1h-2zM39 4h2v1h-2zM44 4h2v1h-2zM39 5h2v1h-2zM44 5h2v1h-2zM39 6h2v1h-2zM44 6h2v1h-2zM47 0h7v1h-7zM47 1h7v1h-7zM47 2h2v1h-2zM47 3h6v1h-6zM47 4h2v1h-2zM47 5h7v1h-7zM47 6h7v1h-7zM55 0h2v1h-2zM60 0h2v1h-2zM55 1h3v1h-3zM60 1h2v1h-2zM55 2h4v1h-4zM60 2h2v1h-2zM55 3h2v1h-2zM58 3h4v1h-4zM55 4h2v1h-2zM59 4h3v1h-3zM55 5h2v1h-2zM60 5h2v1h-2zM55 6h2v1h-2zM60 6h2v1h-2zM63 0h2v1h-2zM68 0h2v1h-2zM63 1h2v1h-2zM68 1h2v1h-2zM63 2h2v1h-2zM68 2h2v1h-2zM63 3h2v1h-2zM68 3h2v1h-2zM63 4h2v1h-2zM68 4h2v1h-2zM63 5h7v1h-7zM64 6h5v1h-5z" fill="#111111"/></svg>
<div class="abs" style="left:1209px;top:299px;width:25px;height:25px;background:#d04444;border:2px solid #1a1a1a;border-radius:3px;"></div>
<svg class="abs" style="left:1214px;top:304px" width="15" height="15" viewBox="0 0 15 15"><path d="M2 2 L13 13 M13 2 L2 13" stroke="#fff" stroke-width="3.2" stroke-linecap="square"/></svg>
<svg class="abs" style="left:770px;top:330px" width="305" height="120" viewBox="0 0 305 120">
<defs>
<linearGradient id="barg" x1="0" x2="1" y1="0" y2="0"><stop offset="0" stop-color="#153a66"/><stop offset="0.6" stop-color="#153a66"/><stop offset="1" stop-color="#1f8fb0"/></linearGradient>
<linearGradient id="farmg" x1="0" x2="0" y1="0" y2="1"><stop offset="0" stop-color="#e8ecd8"/><stop offset="0.2" stop-color="#a8d0f0"/><stop offset="0.55" stop-color="#5aa8e8"/><stop offset="0.62" stop-color="#78c850"/><stop offset="1" stop-color="#68b848"/></linearGradient>
</defs>
<rect x="9" y="58" width="286" height="11" fill="url(#barg)"/>
<rect x="12" y="60" width="3" height="3" fill="#29c0f0"/><rect x="16" y="60" width="3" height="3" fill="#29c0f0"/><rect x="12" y="64" width="3" height="3" fill="#29c0f0"/><rect x="16" y="64" width="3" height="3" fill="#29c0f0"/>
<text x="44" y="51" font-family="Liberation Sans" font-weight="bold" font-size="50" fill="#153a66" stroke="#153a66" stroke-width="10" stroke-linejoin="round" textLength="70" lengthAdjust="spacingAndGlyphs">MY</text>
<text x="44" y="51" font-family="Liberation Sans" font-weight="bold" font-size="50" fill="#fff" stroke="#fff" stroke-width="2.5" stroke-linejoin="round" textLength="70" lengthAdjust="spacingAndGlyphs">MY</text>
<text x="117" y="61" font-family="Liberation Sans" font-weight="bold" font-size="32" fill="#153a66" stroke="#153a66" stroke-width="7.5" stroke-linejoin="round" textLength="164" lengthAdjust="spacingAndGlyphs">TASKBAR</text>
<text x="117" y="61" font-family="Liberation Sans" font-weight="bold" font-size="32" fill="#fff" stroke="#fff" stroke-width="1.5" stroke-linejoin="round" textLength="164" lengthAdjust="spacingAndGlyphs">TASKBAR</text>
<text x="63" y="110" font-family="Liberation Sans" font-weight="bold" font-size="47" fill="#153a66" stroke="#153a66" stroke-width="9" stroke-linejoin="miter" stroke-miterlimit="2" textLength="164" lengthAdjust="spacingAndGlyphs">FARM</text>
<text x="63" y="110" font-family="Liberation Sans" font-weight="bold" font-size="47" fill="url(#farmg)" stroke="url(#farmg)" stroke-width="3" stroke-linejoin="miter" stroke-miterlimit="2" textLength="164" lengthAdjust="spacingAndGlyphs">FARM</text>
<clipPath id="fclip"><text x="63" y="110" font-family="Liberation Sans" font-weight="bold" font-size="47" textLength="164" lengthAdjust="spacingAndGlyphs">FARM</text></clipPath>
<g clip-path="url(#fclip)"><ellipse cx="72" cy="79" rx="9" ry="4" fill="#f4f2e4"/><ellipse cx="95" cy="81" rx="6" ry="3" fill="#f4f2e4"/><ellipse cx="150" cy="80" rx="10" ry="4" fill="#f4f2e4"/><ellipse cx="196" cy="79" rx="9" ry="4" fill="#f4f2e4"/><ellipse cx="220" cy="82" rx="6" ry="3" fill="#f4f2e4"/><path d="M66 104 l3 -3 l3 3 M84 106 l2 -3 l2 3 M132 104 l3 -3 l3 3 M170 106 l2 -3 l2 3 M204 104 l3 -3 l3 3" stroke="#a8e070" stroke-width="1.5" fill="none"/></g>
<g transform="translate(0,3)"><path d="M99 84 L112 73 L125 84" fill="none" stroke="#153a66" stroke-width="5"/><path d="M99 84 L112 73 L125 84" fill="none" stroke="#4aa0f0" stroke-width="2.5"/><rect x="104" y="83" width="16" height="15" fill="#f4ecd8" stroke="#4a3020" stroke-width="1.2"/><rect x="108" y="87" width="8" height="11" fill="#6a4028"/><rect x="110" y="89" width="4" height="9" fill="#1a1008"/></g>
</svg>
<svg class="abs" style="left:852px;top:465px;overflow:visible" width="140.00" height="15.50" viewBox="0 0 62 7" preserveAspectRatio="none"><path d="M1 0h6v1h-6zM0 1h7v1h-7zM0 2h2v1h-2zM0 3h2v1h-2zM0 4h2v1h-2zM0 5h7v1h-7zM1 6h6v1h-6zM9 0h5v1h-5zM8 1h7v1h-7zM8 2h2v1h-2zM13 2h2v1h-2zM8 3h2v1h-2zM13 3h2v1h-2zM8 4h2v1h-2zM13 4h2v1h-2zM8 5h7v1h-7zM9 6h5v1h-5zM16 0h2v1h-2zM21 0h2v1h-2zM16 1h3v1h-3zM21 1h2v1h-2zM16 2h4v1h-4zM21 2h2v1h-2zM16 3h2v1h-2zM19 3h4v1h-4zM16 4h2v1h-2zM20 4h3v1h-3zM16 5h2v1h-2zM21 5h2v1h-2zM16 6h2v1h-2zM21 6h2v1h-2zM24 0h7v1h-7zM24 1h7v1h-7zM26 2h3v1h-3zM26 3h3v1h-3zM26 4h3v1h-3zM26 5h3v1h-3zM26 6h3v1h-3zM32 0h6v1h-6zM32 1h6v1h-6zM34 2h2v1h-2zM34 3h2v1h-2zM34 4h2v1h-2zM32 5h6v1h-6zM32 6h6v1h-6zM39 0h2v1h-2zM44 0h2v1h-2zM39 1h3v1h-3zM44 1h2v1h-2zM39 2h4v1h-4zM44 2h2v1h-2zM39 3h2v1h-2zM42 3h4v1h-4zM39 4h2v1h-2zM43 4h3v1h-3zM39 5h2v1h-2zM44 5h2v1h-2zM39 6h2v1h-2zM44 6h2v1h-2zM47 0h2v1h-2zM52 0h2v1h-2zM47 1h2v1h-2zM52 1h2v1h-2zM47 2h2v1h-2zM52 2h2v1h-2zM47 3h2v1h-2zM52 3h2v1h-2zM47 4h2v1h-2zM52 4h2v1h-2zM47 5h7v1h-7zM48 6h5v1h-5zM55 0h7v1h-7zM55 1h7v1h-7zM55 2h2v1h-2zM55 3h6v1h-6zM55 4h2v1h-2zM55 5h7v1h-7zM55 6h7v1h-7z" fill="#7b5a42"/></svg>
<svg class="abs" style="left:886.5px;top:497px;overflow:visible" width="70.50" height="16.00" viewBox="0 0 31 7" preserveAspectRatio="none"><path d="M0 0h2v1h-2zM0 1h2v1h-2zM0 2h2v1h-2zM0 3h2v1h-2zM0 4h2v1h-2zM0 5h7v1h-7zM0 6h7v1h-7zM9 0h5v1h-5zM8 1h7v1h-7zM8 2h2v1h-2zM13 2h2v1h-2zM8 3h2v1h-2zM13 3h2v1h-2zM8 4h2v1h-2zM13 4h2v1h-2zM8 5h7v1h-7zM9 6h5v1h-5zM17 0h5v1h-5zM16 1h7v1h-7zM16 2h2v1h-2zM21 2h2v1h-2zM16 3h7v1h-7zM16 4h7v1h-7zM16 5h2v1h-2zM21 5h2v1h-2zM16 6h2v1h-2zM21 6h2v1h-2zM24 0h6v1h-6zM24 1h7v1h-7zM24 2h2v1h-2zM29 2h2v1h-2zM24 3h2v1h-2zM29 3h2v1h-2zM24 4h2v1h-2zM29 4h2v1h-2zM24 5h7v1h-7zM24 6h6v1h-6z" fill="#7b5a42"/></svg>
<svg class="abs" style="left:853px;top:534px;overflow:visible" width="139.00" height="16.00" viewBox="0 0 62 7" preserveAspectRatio="none"><path d="M1 0h6v1h-6zM0 1h7v1h-7zM0 2h2v1h-2zM0 3h6v1h-6zM5 4h2v1h-2zM0 5h7v1h-7zM0 6h6v1h-6zM8 0h7v1h-7zM8 1h7v1h-7zM8 2h2v1h-2zM8 3h6v1h-6zM8 4h2v1h-2zM8 5h7v1h-7zM8 6h7v1h-7zM16 0h7v1h-7zM16 1h7v1h-7zM18 2h3v1h-3zM18 3h3v1h-3zM18 4h3v1h-3zM18 5h3v1h-3zM18 6h3v1h-3zM24 0h7v1h-7zM24 1h7v1h-7zM26 2h3v1h-3zM26 3h3v1h-3zM26 4h3v1h-3zM26 5h3v1h-3zM26 6h3v1h-3zM32 0h6v1h-6zM32 1h6v1h-6zM34 2h2v1h-2zM34 3h2v1h-2zM34 4h2v1h-2zM32 5h6v1h-6zM32 6h6v1h-6zM39 0h2v1h-2zM44 0h2v1h-2zM39 1h3v1h-3zM44 1h2v1h-2zM39 2h4v1h-4zM44 2h2v1h-2zM39 3h2v1h-2zM42 3h4v1h-4zM39 4h2v1h-2zM43 4h3v1h-3zM39 5h2v1h-2zM44 5h2v1h-2zM39 6h2v1h-2zM44 6h2v1h-2zM48 0h6v1h-6zM47 1h7v1h-7zM47 2h2v1h-2zM47 3h2v1h-2zM51 3h3v1h-3zM47 4h2v1h-2zM52 4h2v1h-2zM47 5h7v1h-7zM48 6h6v1h-6zM56 0h6v1h-6zM55 1h7v1h-7zM55 2h2v1h-2zM55 3h6v1h-6zM60 4h2v1h-2zM55 5h7v1h-7zM55 6h6v1h-6z" fill="#7b5a42"/></svg>
<svg class="abs" style="left:888px;top:566px;overflow:visible" width="67.50" height="15.50" viewBox="0 0 30 7" preserveAspectRatio="none"><path d="M1 0h5v1h-5zM0 1h7v1h-7zM0 2h2v1h-2zM5 2h2v1h-2zM0 3h2v1h-2zM5 3h2v1h-2zM0 4h2v1h-2zM4 4h3v1h-3zM0 5h7v1h-7zM1 6h6v1h-6zM8 0h2v1h-2zM13 0h2v1h-2zM8 1h2v1h-2zM13 1h2v1h-2zM8 2h2v1h-2zM13 2h2v1h-2zM8 3h2v1h-2zM13 3h2v1h-2zM8 4h2v1h-2zM13 4h2v1h-2zM8 5h7v1h-7zM9 6h5v1h-5zM16 0h6v1h-6zM16 1h6v1h-6zM18 2h2v1h-2zM18 3h2v1h-2zM18 4h2v1h-2zM16 5h6v1h-6zM16 6h6v1h-6zM23 0h7v1h-7zM23 1h7v1h-7zM25 2h3v1h-3zM25 3h3v1h-3zM25 4h3v1h-3zM25 5h3v1h-3zM25 6h3v1h-3zM3 7h2v1h-2z" fill="#7b5a42"/></svg>
<div class="abs" style="left:837px;top:520px;width:171px;height:3px;background:#a0705e;"></div>
<svg class="abs" style="left:886.5px;top:697px;overflow:visible" width="71.50" height="10.00" viewBox="0 0 54 7" preserveAspectRatio="none"><path d="M0 0h2v1h-2zM5 0h2v1h-2zM0 1h2v1h-2zM5 1h2v1h-2zM0 2h2v1h-2zM5 2h2v1h-2zM0 3h2v1h-2zM5 3h2v1h-2zM1 4h2v1h-2zM4 4h2v1h-2zM2 5h3v1h-3zM3 6h1v1h-1zM13 0h2v1h-2zM12 1h3v1h-3zM13 2h2v1h-2zM13 3h2v1h-2zM13 4h2v1h-2zM13 5h2v1h-2zM12 6h4v1h-4zM17 5h2v1h-2zM17 6h2v1h-2zM21 0h5v1h-5zM20 1h7v1h-7zM20 2h2v1h-2zM24 2h3v1h-3zM20 3h2v1h-2zM23 3h1v1h-1zM25 3h2v1h-2zM20 4h3v1h-3zM25 4h2v1h-2zM20 5h7v1h-7zM21 6h5v1h-5zM28 5h2v1h-2zM28 6h2v1h-2zM32 0h5v1h-5zM31 1h7v1h-7zM31 2h2v1h-2zM35 2h3v1h-3zM31 3h2v1h-2zM34 3h1v1h-1zM36 3h2v1h-2zM31 4h3v1h-3zM36 4h2v1h-2zM31 5h7v1h-7zM32 6h5v1h-5zM39 0h7v1h-7zM39 1h7v1h-7zM39 2h2v1h-2zM39 3h6v1h-6zM39 4h2v1h-2zM39 5h7v1h-7zM39 6h7v1h-7zM48 0h5v1h-5zM47 1h7v1h-7zM47 2h2v1h-2zM51 2h3v1h-3zM47 3h2v1h-2zM50 3h1v1h-1zM52 3h2v1h-2zM47 4h3v1h-3zM52 4h2v1h-2zM47 5h7v1h-7zM48 6h5v1h-5z" fill="#7b5a42"/></svg>
<svg class="abs" style="left:0;top:993px" width="1919" height="39" viewBox="0 0 1919 39">
<defs>
<pattern id="bush" x="0" y="3" width="19" height="26" patternUnits="userSpaceOnUse"><rect x="0" y="0" width="19" height="2" fill="#76ae48"/><rect x="0" y="2" width="8" height="2" fill="#76ae48"/><rect x="8" y="2" width="2" height="2" fill="#2f8a3a"/><rect x="10" y="2" width="9" height="2" fill="#76ae48"/><rect x="0" y="4" width="6" height="2" fill="#76ae48"/><rect x="6" y="4" width="4" height="2" fill="#2f8a3a"/><rect x="10" y="4" width="6" height="2" fill="#76ae48"/><rect x="16" y="4" width="2" height="2" fill="#2f8a3a"/><rect x="18" y="4" width="1" height="2" fill="#76ae48"/><rect x="0" y="6" width="2" height="2" fill="#76ae48"/><rect x="2" y="6" width="4" height="2" fill="#2f8a3a"/><rect x="6" y="6" width="2" height="2" fill="#76ae48"/><rect x="8" y="6" width="4" height="2" fill="#2f8a3a"/><rect x="12" y="6" width="2" height="2" fill="#76ae48"/><rect x="14" y="6" width="4" height="2" fill="#2f8a3a"/><rect x="18" y="6" width="1" height="2" fill="#76ae48"/><rect x="0" y="8" width="2" height="2" fill="#2f8a3a"/><rect x="2" y="8" width="2" height="2" fill="#0b2e46"/><rect x="4" y="8" width="4" height="2" fill="#2f8a3a"/><rect x="8" y="8" width="2" height="2" fill="#76ae48"/><rect x="10" y="8" width="2" height="2" fill="#2f8a3a"/><rect x="12" y="8" width="2" height="2" fill="#0b2e46"/><rect x="14" y="8" width="5" height="2" fill="#2f8a3a"/><rect x="0" y="10" width="2" height="2" fill="#0b2e46"/><rect x="2" y="10" width="2" height="2" fill="#2f8a3a"/><rect x="4" y="10" width="4" height="2" fill="#76ae48"/><rect x="8" y="10" width="2" height="2" fill="#2f8a3a"/><rect x="10" y="10" width="2" height="2" fill="#0b2e46"/><rect x="12" y="10" width="2" height="2" fill="#2f8a3a"/><rect x="14" y="10" width="2" height="2" fill="#76ae48"/><rect x="16" y="10" width="2" height="2" fill="#2f8a3a"/><rect x="18" y="10" width="1" height="2" fill="#0b2e46"/><rect x="0" y="12" width="2" height="2" fill="#2f8a3a"/><rect x="2" y="12" width="4" height="2" fill="#76ae48"/><rect x="6" y="12" width="4" height="2" fill="#2f8a3a"/><rect x="10" y="12" width="4" height="2" fill="#0b2e46"/><rect x="14" y="12" width="4" height="2" fill="#76ae48"/><rect x="18" y="12" width="1" height="2" fill="#2f8a3a"/><rect x="0" y="14" width="2" height="2" fill="#0b2e46"/><rect x="2" y="14" width="2" height="2" fill="#76ae48"/><rect x="4" y="14" width="4" height="2" fill="#2f8a3a"/><rect x="8" y="14" width="2" height="2" fill="#0b2e46"/><rect x="10" y="14" width="2" height="2" fill="#195848"/><rect x="12" y="14" width="2" height="2" fill="#2f8a3a"/><rect x="14" y="14" width="2" height="2" fill="#76ae48"/><rect x="16" y="14" width="2" height="2" fill="#195848"/><rect x="18" y="14" width="1" height="2" fill="#0b2e46"/><rect x="0" y="16" width="2" height="2" fill="#195848"/><rect x="2" y="16" width="6" height="2" fill="#2f8a3a"/><rect x="8" y="16" width="2" height="2" fill="#195848"/><rect x="10" y="16" width="2" height="2" fill="#0b2e46"/><rect x="12" y="16" width="2" height="2" fill="#195848"/><rect x="14" y="16" width="4" height="2" fill="#2f8a3a"/><rect x="18" y="16" width="1" height="2" fill="#195848"/><rect x="0" y="18" width="2" height="2" fill="#060606"/><rect x="2" y="18" width="2" height="2" fill="#195848"/><rect x="4" y="18" width="2" height="2" fill="#2f8a3a"/><rect x="6" y="18" width="2" height="2" fill="#195848"/><rect x="8" y="18" width="2" height="2" fill="#060606"/><rect x="10" y="18" width="2" height="2" fill="#0b2e46"/><rect x="12" y="18" width="4" height="2" fill="#195848"/><rect x="16" y="18" width="2" height="2" fill="#2f8a3a"/><rect x="18" y="18" width="1" height="2" fill="#060606"/><rect x="0" y="20" width="2" height="2" fill="#060606"/><rect x="2" y="20" width="2" height="2" fill="#8a4a30"/><rect x="4" y="20" width="2" height="2" fill="#060606"/><rect x="6" y="20" width="4" height="2" fill="#195848"/><rect x="10" y="20" width="4" height="2" fill="#060606"/><rect x="14" y="20" width="2" height="2" fill="#195848"/><rect x="16" y="20" width="2" height="2" fill="#060606"/><rect x="18" y="20" width="1" height="2" fill="#195848"/><rect x="0" y="22" width="6" height="2" fill="#8a4a30"/><rect x="6" y="22" width="2" height="2" fill="#060606"/><rect x="8" y="22" width="2" height="2" fill="#195848"/><rect x="10" y="22" width="4" height="2" fill="#8a4a30"/><rect x="14" y="22" width="4" height="2" fill="#060606"/><rect x="18" y="22" width="1" height="2" fill="#195848"/><rect x="0" y="24" width="6" height="2" fill="#8a4a30"/><rect x="6" y="24" width="4" height="2" fill="#060606"/><rect x="10" y="24" width="6" height="2" fill="#8a4a30"/><rect x="16" y="24" width="3" height="2" fill="#060606"/></pattern>
<pattern id="gr" x="0" y="0" width="10" height="3" patternUnits="userSpaceOnUse"><rect x="1" y="1" width="1.02" height="1.02" fill="#4cc444"/><rect x="5" y="1" width="1.02" height="1.02" fill="#4cc444"/><rect x="6" y="1" width="1.02" height="1.02" fill="#4cc444"/><rect x="8" y="1" width="1.02" height="1.02" fill="#4cc444"/><rect x="2" y="2" width="1.02" height="1.02" fill="#4cc444"/><rect x="7" y="2" width="1.02" height="1.02" fill="#4cc444"/></pattern>
</defs>
<rect x="0" y="0" width="1919" height="3" fill="#050505"/>
<rect x="0" y="3" width="1919" height="26" fill="url(#bush)" shape-rendering="crispEdges"/>
<rect x="0" y="29" width="1919" height="3" fill="#050505"/>
<rect x="0" y="32" width="1919" height="7" fill="#90e864"/>
<g transform="translate(0,33.5) scale(1.9)" shape-rendering="crispEdges"><rect x="0" y="0" width="1010" height="3" fill="url(#gr)"/></g>
</svg>
<svg class="abs" style="left:45px;top:943px" width="102" height="84" viewBox="0 0 102 84" shape-rendering="crispEdges">
<path d="M42 0 L0 44 L0 50 L12 50 L12 84 L100 84 L100 50 L86 44 Z" fill="#0a0a0a"/>
<path d="M42 3 L3 43 L3 47 L13 47 L42 17 L71 47 L83 47 L83 43 Z" fill="#5a86c8"/>
<path d="M42 6 L8 41 L12 41 L42 11 L72 41 L77 41 Z" fill="#8ab0e8"/>
<path d="M42 19 L15 47 V82 H72 V47 Z" fill="#efdca0"/>
<path d="M34 30 H50 M26 38 H58 M18 46 H68 M16 54 H72 M16 62 H72 M16 70 H72 M16 78 H72" stroke="#d4b878" stroke-width="2"/>
<rect x="27" y="43" width="31" height="39" fill="#8a5a4c"/>
<rect x="31" y="47" width="24" height="30" fill="#565656"/>
<rect x="31" y="77" width="24" height="5" fill="#c08a78"/>
<rect x="75" y="50" width="22" height="32" fill="#efdca0"/>
<path d="M77 58 H95 M77 66 H95 M77 74 H95" stroke="#d4b878" stroke-width="2"/>
<rect x="75" y="76" width="22" height="6" fill="#8a5a4c"/>
<path d="M83 47 L100 56 L100 62 L83 53 Z" fill="#5a86c8"/>
<path d="M84 48 L99 56 L99 58 L84 50 Z" fill="#8ab0e8"/></svg>
<svg class="abs" style="left:6px;top:997px" width="20" height="23" viewBox="0 0 20 23" shape-rendering="crispEdges"><ellipse cx="10.0" cy="11.5" rx="9.0" ry="10.5" fill="#0a0a0a"/><ellipse cx="10.0" cy="11.5" rx="7.8" ry="9.3" fill="#fff"/><ellipse cx="10.0" cy="11.5" rx="5.8" ry="7.3" fill="#0a0a0a"/><ellipse cx="10.0" cy="11.5" rx="4.8" ry="6.3" fill="#7a5040"/></svg>
<svg class="abs" style="left:293px;top:997px" width="25" height="23" viewBox="0 0 25 23" shape-rendering="crispEdges"><ellipse cx="12.5" cy="11.5" rx="11.5" ry="10.5" fill="#0a0a0a"/><ellipse cx="12.5" cy="11.5" rx="10.3" ry="9.3" fill="#fff"/><ellipse cx="12.5" cy="11.5" rx="8.3" ry="7.3" fill="#0a0a0a"/><ellipse cx="12.5" cy="11.5" rx="7.3" ry="6.3" fill="#e8e8e8"/></svg>
<svg class="abs" style="left:591px;top:998px" width="20" height="23" viewBox="0 0 20 23" shape-rendering="crispEdges"><ellipse cx="10.0" cy="11.5" rx="9.0" ry="10.5" fill="#0a0a0a"/><ellipse cx="10.0" cy="11.5" rx="7.8" ry="9.3" fill="#fff"/><ellipse cx="10.0" cy="11.5" rx="5.8" ry="7.3" fill="#0a0a0a"/><ellipse cx="10.0" cy="11.5" rx="4.8" ry="6.3" fill="#7a5040"/></svg>
<svg class="abs" style="left:1031px;top:997px" width="20" height="23" viewBox="0 0 20 23" shape-rendering="crispEdges"><ellipse cx="10.0" cy="11.5" rx="9.0" ry="10.5" fill="#0a0a0a"/><ellipse cx="10.0" cy="11.5" rx="7.8" ry="9.3" fill="#fff"/><ellipse cx="10.0" cy="11.5" rx="5.8" ry="7.3" fill="#0a0a0a"/><ellipse cx="10.0" cy="11.5" rx="4.8" ry="6.3" fill="#7a5040"/></svg>
<svg class="abs" style="left:1103px;top:997px" width="20" height="23" viewBox="0 0 20 23" shape-rendering="crispEdges"><ellipse cx="10.0" cy="11.5" rx="9.0" ry="10.5" fill="#0a0a0a"/><ellipse cx="10.0" cy="11.5" rx="7.8" ry="9.3" fill="#fff"/><ellipse cx="10.0" cy="11.5" rx="5.8" ry="7.3" fill="#0a0a0a"/><ellipse cx="10.0" cy="11.5" rx="4.8" ry="6.3" fill="#e8e8e8"/></svg>
<svg class="abs" style="left:1170px;top:997px" width="20" height="23" viewBox="0 0 20 23" shape-rendering="crispEdges"><ellipse cx="10.0" cy="11.5" rx="9.0" ry="10.5" fill="#0a0a0a"/><ellipse cx="10.0" cy="11.5" rx="7.8" ry="9.3" fill="#fff"/><ellipse cx="10.0" cy="11.5" rx="5.8" ry="7.3" fill="#0a0a0a"/><ellipse cx="10.0" cy="11.5" rx="4.8" ry="6.3" fill="#4a4a4a"/></svg>
<svg class="abs" style="left:1825px;top:997px" width="20" height="23" viewBox="0 0 20 23" shape-rendering="crispEdges"><ellipse cx="10.0" cy="11.5" rx="9.0" ry="10.5" fill="#0a0a0a"/><ellipse cx="10.0" cy="11.5" rx="7.8" ry="9.3" fill="#fff"/><ellipse cx="10.0" cy="11.5" rx="5.8" ry="7.3" fill="#0a0a0a"/><ellipse cx="10.0" cy="11.5" rx="4.8" ry="6.3" fill="#e0e0e0"/></svg>
<svg class="abs" style="left:246px;top:1000px" width="22" height="26" viewBox="0 0 22 26" shape-rendering="crispEdges"><path d="M4 8 Q4 3 10 3 Q16 3 17 9 L21 13 Q21 22 12 23 Q3 23 2 16Z" fill="#505050" stroke="#0a0a0a" stroke-width="1.2"/><rect x="8" y="0" width="5" height="4" fill="#c03030"/><rect x="9" y="11" width="4" height="3" fill="#f09030"/><rect x="10" y="14" width="2" height="3" fill="#c03030"/><rect x="7" y="8" width="2" height="2" fill="#111"/><rect x="11" y="22" width="2" height="4" fill="#d06020"/></svg>
<svg class="abs" style="left:360px;top:998px" width="22" height="26" viewBox="0 0 22 26" shape-rendering="crispEdges"><path d="M4 8 Q4 3 10 3 Q16 3 17 9 L21 13 Q21 22 12 23 Q3 23 2 16Z" fill="#505050" stroke="#0a0a0a" stroke-width="1.2"/><rect x="8" y="0" width="5" height="4" fill="#c03030"/><rect x="9" y="11" width="4" height="3" fill="#f09030"/><rect x="10" y="14" width="2" height="3" fill="#c03030"/><rect x="7" y="8" width="2" height="2" fill="#111"/><rect x="11" y="22" width="2" height="4" fill="#d06020"/></svg>
<svg class="abs" style="left:724px;top:1000px" width="22" height="26" viewBox="0 0 22 26" shape-rendering="crispEdges"><path d="M4 8 Q4 3 10 3 Q16 3 17 9 L21 13 Q21 22 12 23 Q3 23 2 16Z" fill="#505050" stroke="#0a0a0a" stroke-width="1.2"/><rect x="8" y="0" width="5" height="4" fill="#c03030"/><rect x="9" y="11" width="4" height="3" fill="#f09030"/><rect x="10" y="14" width="2" height="3" fill="#c03030"/><rect x="7" y="8" width="2" height="2" fill="#111"/><rect x="11" y="22" width="2" height="4" fill="#d06020"/></svg>
<svg class="abs" style="left:790px;top:1000px" width="22" height="26" viewBox="0 0 22 26" shape-rendering="crispEdges"><path d="M4 8 Q4 3 10 3 Q16 3 17 9 L21 13 Q21 22 12 23 Q3 23 2 16Z" fill="#505050" stroke="#0a0a0a" stroke-width="1.2"/><rect x="8" y="0" width="5" height="4" fill="#c03030"/><rect x="9" y="11" width="4" height="3" fill="#f09030"/><rect x="10" y="14" width="2" height="3" fill="#c03030"/><rect x="7" y="8" width="2" height="2" fill="#111"/><rect x="11" y="22" width="2" height="4" fill="#d06020"/></svg>
<svg class="abs" style="left:992px;top:1001px" width="22" height="26" viewBox="0 0 22 26" shape-rendering="crispEdges"><path d="M4 8 Q4 3 10 3 Q16 3 17 9 L21 13 Q21 22 12 23 Q3 23 2 16Z" fill="#505050" stroke="#0a0a0a" stroke-width="1.2"/><rect x="8" y="0" width="5" height="4" fill="#c03030"/><rect x="9" y="11" width="4" height="3" fill="#f09030"/><rect x="10" y="14" width="2" height="3" fill="#c03030"/><rect x="7" y="8" width="2" height="2" fill="#111"/><rect x="11" y="22" width="2" height="4" fill="#d06020"/></svg>
<svg class="abs" style="left:1124px;top:1001px" width="22" height="26" viewBox="0 0 22 26" shape-rendering="crispEdges"><path d="M4 8 Q4 3 10 3 Q16 3 17 9 L21 13 Q21 22 12 23 Q3 23 2 16Z" fill="#505050" stroke="#0a0a0a" stroke-width="1.2"/><rect x="8" y="0" width="5" height="4" fill="#c03030"/><rect x="9" y="11" width="4" height="3" fill="#f09030"/><rect x="10" y="14" width="2" height="3" fill="#c03030"/><rect x="7" y="8" width="2" height="2" fill="#111"/><rect x="11" y="22" width="2" height="4" fill="#d06020"/></svg>
<svg class="abs" style="left:1506px;top:998px" width="24" height="26" viewBox="0 0 24 26" shape-rendering="crispEdges"><path d="M3 9 Q4 2 12 2 Q20 2 21 10 Q22 22 12 23 Q2 23 3 9Z" fill="#e8b878" stroke="#0a0a0a" stroke-width="1.2"/><rect x="10" y="0" width="4" height="3" fill="#c03030"/><rect x="12" y="11" width="4" height="3" fill="#c04040"/><rect x="9" y="8" width="2" height="2" fill="#111"/></svg>
<svg class="abs" style="left:194px;top:989px" width="49" height="36" viewBox="0 0 49 36" shape-rendering="crispEdges"><rect x="0" y="3" width="31" height="29" rx="3" fill="#0a0a0a"/><rect x="24" y="7" width="25" height="28" rx="3" fill="#0a0a0a"/><rect x="7" y="0" width="9" height="5" fill="#0a0a0a"/><rect x="20" y="0" width="8" height="5" fill="#0a0a0a"/><rect x="9" y="1" width="4" height="3" fill="#f0d8c0"/><rect x="22" y="1" width="3" height="3" fill="#f0d8c0"/><rect x="2" y="5" width="27" height="25" rx="2" fill="#f6f6f6"/><rect x="29" y="9" width="18" height="24" rx="2" fill="#f6f6f6"/><rect x="2" y="5" width="13" height="8" fill="#5a5a5a"/><rect x="7" y="12" width="2" height="4" fill="#0a0a0a"/><rect x="14" y="12" width="2" height="4" fill="#0a0a0a"/><rect x="5" y="18" width="19" height="12" rx="2" fill="#f2cdb0"/><rect x="7" y="22" width="2" height="2" fill="#c8a080"/><rect x="19" y="22" width="2" height="2" fill="#c8a080"/><rect x="27" y="10" width="9" height="4" fill="#0a0a0a"/><rect x="37" y="14" width="10" height="10" fill="#5a5a5a"/><rect x="31" y="24" width="7" height="9" fill="#5a5a5a"/><rect x="30" y="32" width="4" height="4" fill="#0a0a0a"/><rect x="42" y="32" width="4" height="4" fill="#0a0a0a"/></svg>
<svg class="abs" style="left:652px;top:989px" width="49" height="36" viewBox="0 0 49 36" shape-rendering="crispEdges"><rect x="0" y="3" width="31" height="29" rx="3" fill="#0a0a0a"/><rect x="24" y="7" width="25" height="28" rx="3" fill="#0a0a0a"/><rect x="7" y="0" width="9" height="5" fill="#0a0a0a"/><rect x="20" y="0" width="8" height="5" fill="#0a0a0a"/><rect x="9" y="1" width="4" height="3" fill="#f0d8c0"/><rect x="22" y="1" width="3" height="3" fill="#f0d8c0"/><rect x="2" y="5" width="27" height="25" rx="2" fill="#f6f6f6"/><rect x="29" y="9" width="18" height="24" rx="2" fill="#f6f6f6"/><rect x="2" y="5" width="13" height="8" fill="#5a5a5a"/><rect x="7" y="12" width="2" height="4" fill="#0a0a0a"/><rect x="14" y="12" width="2" height="4" fill="#0a0a0a"/><rect x="5" y="18" width="19" height="12" rx="2" fill="#f2cdb0"/><rect x="7" y="22" width="2" height="2" fill="#c8a080"/><rect x="19" y="22" width="2" height="2" fill="#c8a080"/><rect x="27" y="10" width="9" height="4" fill="#0a0a0a"/><rect x="37" y="14" width="10" height="10" fill="#5a5a5a"/><rect x="31" y="24" width="7" height="9" fill="#5a5a5a"/><rect x="30" y="32" width="4" height="4" fill="#0a0a0a"/><rect x="42" y="32" width="4" height="4" fill="#0a0a0a"/></svg>
<svg class="abs" style="left:259px;top:981px" width="31" height="44" viewBox="0 0 31 44" shape-rendering="crispEdges"><rect x="13" y="0" width="5" height="5" fill="#0a0a0a"/><rect x="22" y="0" width="6" height="5" fill="#0a0a0a"/><rect x="12" y="3" width="18" height="18" rx="1" fill="#0a0a0a"/><rect x="10" y="18" width="19" height="10" fill="#0a0a0a"/><rect x="0" y="26" width="30" height="16" rx="2" fill="#0a0a0a"/><rect x="13" y="4" width="16" height="16" fill="#f6f6f6"/><rect x="15" y="10" width="14" height="10" fill="#f0c8a8"/><rect x="16" y="10" width="3" height="5" fill="#0a0a0a"/><rect x="11" y="19" width="17" height="9" fill="#f6f6f6"/><rect x="1" y="27" width="28" height="13" fill="#f4f4f4"/><rect x="5" y="39" width="4" height="5" fill="#0a0a0a"/><rect x="14" y="39" width="4" height="5" fill="#0a0a0a"/><rect x="22" y="39" width="4" height="5" fill="#0a0a0a"/></svg>
<svg class="abs" style="left:1655px;top:985px" width="31" height="44" viewBox="0 0 31 44" shape-rendering="crispEdges"><rect x="13" y="0" width="5" height="5" fill="#0a0a0a"/><rect x="22" y="0" width="6" height="5" fill="#0a0a0a"/><rect x="12" y="3" width="18" height="18" rx="1" fill="#0a0a0a"/><rect x="10" y="18" width="19" height="10" fill="#0a0a0a"/><rect x="0" y="26" width="30" height="16" rx="2" fill="#0a0a0a"/><rect x="13" y="4" width="16" height="16" fill="#f6f6f6"/><rect x="15" y="10" width="14" height="10" fill="#f0c8a8"/><rect x="16" y="10" width="3" height="5" fill="#0a0a0a"/><rect x="11" y="19" width="17" height="9" fill="#f6f6f6"/><rect x="1" y="27" width="28" height="13" fill="#f4f4f4"/><rect x="5" y="39" width="4" height="5" fill="#0a0a0a"/><rect x="14" y="39" width="4" height="5" fill="#0a0a0a"/><rect x="22" y="39" width="4" height="5" fill="#0a0a0a"/></svg>
<svg class="abs" style="left:385px;top:986px" width="51" height="39" viewBox="0 0 51 39" shape-rendering="crispEdges"><path d="M1 18 L13 13 L18 4 L19 0 L34 0 L37 5 L43 6 L48 14 L50 22 V38 H1 Z" fill="#0a0a0a"/><path d="M3 20 L14 16 L20 6 L33 6 L41 9 L48 22 V36 H3Z" fill="#b08068"/><rect x="21" y="6" width="16" height="15" fill="#efc8a8"/><rect x="26" y="11" width="6" height="3" fill="#e0b090"/><rect x="40" y="6" width="6" height="12" fill="#f4f4f4"/><rect x="5" y="23" width="9" height="8" fill="#f4f4f4"/><rect x="10" y="31" width="8" height="5" fill="#f4f4f4"/><rect x="14" y="34" width="4" height="5" fill="#0a0a0a"/><rect x="25" y="34" width="4" height="5" fill="#0a0a0a"/><rect x="37" y="34" width="4" height="5" fill="#0a0a0a"/></svg>
<svg class="abs" style="left:459px;top:996px" width="45" height="29" viewBox="0 0 45 29" shape-rendering="crispEdges"><path d="M2 6 Q2 0 10 0 L30 0 L44 4 L44 22 L30 27 L4 27 Q0 27 0 20Z" fill="#f4f4f4" stroke="#0a0a0a" stroke-width="1.5"/><circle cx="26" cy="10" r="5" fill="#8a6a58" stroke="#0a0a0a"/><circle cx="42" cy="10" r="5" fill="#8a6a58" stroke="#0a0a0a"/><rect x="28" y="8" width="13" height="14" fill="#f8dcc0"/><rect x="31" y="12" width="2" height="2" fill="#111"/><rect x="36" y="12" width="2" height="2" fill="#111"/></svg>
<svg class="abs" style="left:556px;top:989px" width="37" height="40" viewBox="0 0 37 40" shape-rendering="crispEdges"><g transform="translate(2,1) scale(0.971,1.000)"><path d="M8 2 Q14 -1 18 3 Q26 0 28 6 Q34 10 31 18 Q34 28 26 32 Q20 37 12 33 Q2 34 3 24 Q-1 16 4 10 Q3 4 8 2Z" fill="#ececec" stroke="#fff" stroke-width="3"/><path d="M8 2 Q14 -1 18 3 Q26 0 28 6 Q34 10 31 18 Q34 28 26 32 Q20 37 12 33 Q2 34 3 24 Q-1 16 4 10 Q3 4 8 2Z" fill="none" stroke="#0a0a0a" stroke-width="1" stroke-dasharray="2 2"/><path d="M10 14 Q14 10 18 14 M16 22 Q20 18 24 22" fill="none" stroke="#c8c8c8" stroke-width="1.5"/></g></svg>
<svg class="abs" style="left:940px;top:987px" width="46" height="40" viewBox="0 0 46 40" shape-rendering="crispEdges"><g transform="translate(2,1) scale(1.235,1.000)"><path d="M8 2 Q14 -1 18 3 Q26 0 28 6 Q34 10 31 18 Q34 28 26 32 Q20 37 12 33 Q2 34 3 24 Q-1 16 4 10 Q3 4 8 2Z" fill="#ececec" stroke="#fff" stroke-width="3"/><path d="M8 2 Q14 -1 18 3 Q26 0 28 6 Q34 10 31 18 Q34 28 26 32 Q20 37 12 33 Q2 34 3 24 Q-1 16 4 10 Q3 4 8 2Z" fill="none" stroke="#0a0a0a" stroke-width="1" stroke-dasharray="2 2"/><path d="M10 14 Q14 10 18 14 M16 22 Q20 18 24 22" fill="none" stroke="#c8c8c8" stroke-width="1.5"/></g><ellipse cx="9" cy="10" rx="5" ry="6.5" fill="#f0e020" stroke="#0a0a0a" stroke-width="1.5"/></svg>
<svg class="abs" style="left:1219px;top:987px" width="48" height="41" viewBox="0 0 48 41" shape-rendering="crispEdges"><path d="M1 20 L12 16 L16 38 L3 39Z" fill="#f4b8c0" stroke="#0a0a0a" stroke-width="1"/><path d="M8 34 L36 4 Q42 0 45 5 Q47 9 43 13 L16 40 Q10 42 7 39 Q5 37 8 34Z" fill="#8a4a30" stroke="#fff" stroke-width="3"/><path d="M8 34 L36 4 Q42 0 45 5 Q47 9 43 13 L16 40 Q10 42 7 39 Q5 37 8 34Z" fill="none" stroke="#0a0a0a" stroke-width="1"/><path d="M14 32 L36 9" stroke="#b06a40" stroke-width="2"/><circle cx="34" cy="32" r="5" fill="none" stroke="#fff" stroke-width="2.5"/><circle cx="34" cy="32" r="5" fill="none" stroke="#0a0a0a" stroke-width="0.8"/></svg>
<svg class="abs" style="left:1299px;top:1002px" width="30" height="24" viewBox="0 0 30 24" shape-rendering="crispEdges"><path d="M2 4 L24 2 L28 22 L4 22Z" fill="#f4f4f4" stroke="#0a0a0a" stroke-width="1.2"/><path d="M4 8 L12 6 L14 16 L6 18Z" fill="#444"/><path d="M20 12 L26 12 L26 20 L20 20Z" fill="#555"/></svg>
<svg class="abs" style="left:1321px;top:985px" width="26" height="43" viewBox="0 0 26 43" shape-rendering="crispEdges"><path d="M7 1 H19 Q22 1 22 5 V11 Q25 14 25 20 V38 Q25 42 20 42 H6 Q1 42 1 38 V20 Q1 14 4 11 V5 Q4 1 7 1Z" fill="#e8b440" stroke="#fff" stroke-width="2"/><path d="M7 1 H19 Q22 1 22 5 V11 Q25 14 25 20 V38 Q25 42 20 42 H6 Q1 42 1 38 V20 Q1 14 4 11 V5 Q4 1 7 1Z" fill="none" stroke="#0a0a0a" stroke-width="0.8" transform="translate(0.5,0.5) scale(0.96)"/><rect x="7" y="6" width="12" height="6" rx="3" fill="#fff"/><path d="M8 26 L10 20 L13 24 L16 20 L18 26" fill="none" stroke="#40c0c0" stroke-width="2"/><rect x="6" y="27" width="14" height="3" fill="#40c0c0" opacity="0.7"/></svg>
<svg class="abs" style="left:1361px;top:996px" width="30" height="30" viewBox="0 0 30 30" shape-rendering="crispEdges"><path d="M2 10 L12 4 L28 2 L28 28 L4 28Z" fill="#9a7060" stroke="#0a0a0a" stroke-width="1.2"/><path d="M6 14 L14 12 L14 20 L6 22Z" fill="#f4f4f4"/><path d="M16 22 L24 20 L24 28 L16 28Z" fill="#f4f4f4"/></svg>
<svg class="abs" style="left:1385px;top:985px" width="26" height="43" viewBox="0 0 26 43" shape-rendering="crispEdges"><path d="M7 1 H19 Q22 1 22 5 V11 Q25 14 25 20 V38 Q25 42 20 42 H6 Q1 42 1 38 V20 Q1 14 4 11 V5 Q4 1 7 1Z" fill="#e8b440" stroke="#fff" stroke-width="2"/><path d="M7 1 H19 Q22 1 22 5 V11 Q25 14 25 20 V38 Q25 42 20 42 H6 Q1 42 1 38 V20 Q1 14 4 11 V5 Q4 1 7 1Z" fill="none" stroke="#0a0a0a" stroke-width="0.8" transform="translate(0.5,0.5) scale(0.96)"/><rect x="7" y="6" width="12" height="6" rx="3" fill="#fff"/><path d="M8 26 L10 20 L13 24 L16 20 L18 26" fill="none" stroke="#40c0c0" stroke-width="2"/><rect x="6" y="27" width="14" height="3" fill="#40c0c0" opacity="0.7"/></svg>
<svg class="abs" style="left:1467px;top:980px" width="37" height="54" viewBox="0 0 37 54" shape-rendering="crispEdges"><path d="M10 2 H26 Q30 2 30 6 V14 Q35 18 35 26 V46 Q35 52 29 52 H8 Q2 52 2 46 V26 Q2 18 7 14 V6 Q7 2 10 2Z" fill="#e8b440" stroke="#fff" stroke-width="2.5"/><path d="M10 3 H26 Q29 3 29 6 V14 Q34 18 34 26 V46 Q34 51 29 51 H8 Q3 51 3 46 V26 Q3 18 8 14 V6 Q8 3 10 3Z" fill="none" stroke="#0a0a0a" stroke-width="1"/><rect x="10" y="8" width="16" height="8" rx="4" fill="#fff"/><path d="M11 34 L13 26 L18 31 L23 26 L25 34" fill="none" stroke="#f8f020" stroke-width="2.5"/><rect x="8" y="36" width="20" height="8" fill="#f8e040" opacity="0.6"/></svg>
<svg class="abs" style="left:1609px;top:981px" width="37" height="54" viewBox="0 0 37 54" shape-rendering="crispEdges"><path d="M10 2 H26 Q30 2 30 6 V14 Q35 18 35 26 V46 Q35 52 29 52 H8 Q2 52 2 46 V26 Q2 18 7 14 V6 Q7 2 10 2Z" fill="#e8b440" stroke="#fff" stroke-width="2.5"/><path d="M10 3 H26 Q29 3 29 6 V14 Q34 18 34 26 V46 Q34 51 29 51 H8 Q3 51 3 46 V26 Q3 18 8 14 V6 Q8 3 10 3Z" fill="none" stroke="#0a0a0a" stroke-width="1"/><rect x="10" y="8" width="16" height="8" rx="4" fill="#fff"/></svg>
<svg class="abs" style="left:1620px;top:993px" width="34" height="40" viewBox="0 0 34 40" shape-rendering="crispEdges"><path d="M4 34 L26 4 L32 2 L33 8 L10 38Z" fill="#e0e0e0" stroke="#fff" stroke-width="2"/><path d="M4 34 L26 4 L32 2 L33 8 L10 38Z" fill="none" stroke="#0a0a0a" stroke-width="1"/><path d="M4 34 L12 24 L16 27 L8 37Z" fill="#a05a30"/><path d="M24 5 L30 3 L31 8 L27 10Z" fill="#a05a30"/></svg>
<div class="abs" style="left:0;top:1032px;width:1919px;height:47px;background:linear-gradient(to right,#1b1e2b 0%,#1b1f2e 10%,#1a2048 19%,#18216a 28%,#172166 55%,#19215a 64%,#1b1f3a 71%,#1b1e2c 78%,#1b1e2b 100%)"></div>
<svg class="abs" style="left:21px;top:1045px" width="23" height="23" viewBox="0 0 23 23"><rect x="0" y="0" width="11" height="11" fill="#3ec8f6"/><rect x="12" y="0" width="11" height="11" fill="#3ec8f6"/><rect x="0" y="12" width="11" height="11" fill="#2ab0ec"/><rect x="12" y="12" width="11" height="11" fill="#2ab0ec"/></svg>
<svg class="abs" style="left:65px;top:1046px" width="24" height="20" viewBox="0 0 24 20"><rect x="0.5" y="0.5" width="23" height="19" fill="#dfe8f0" stroke="#9ab"/><path d="M1 16 L5 13 L8 15 L10 5 L12 14 L14 9 L16 15 L19 12 L23 16 V19 H1Z" fill="#70b0e8" stroke="#2a7ac0" stroke-width="0.8"/></svg>
<svg class="abs" style="left:111px;top:1046px" width="21" height="21" viewBox="0 0 21 21"><path d="M3 1 L17 0 L20 3 V18 L18 20 L3 21 L1 18 V3Z" fill="#fff" stroke="#111" stroke-width="1.5"/><path d="M6 5 H9 L13 12 V5 H15 M6 5 V16 H8 M6 16 V7 M13 16 H15 L8 6" fill="none" stroke="#111" stroke-width="1.8"/></svg>
<svg class="abs" style="left:152px;top:1044px" width="25" height="23" viewBox="0 0 25 23"><path d="M0 2 Q0 0 2 0 H9 L11 3 H23 Q25 3 25 5 V21 Q25 23 23 23 H2 Q0 23 0 21Z" fill="#f4c030"/><rect x="0" y="6" width="25" height="17" rx="1" fill="#ffd650"/><rect x="8" y="16" width="10" height="7" fill="#1a70c8"/></svg>
<svg class="abs" style="left:197px;top:1044px" width="24" height="24" viewBox="0 0 24 24"><circle cx="12" cy="12" r="12" fill="#db4437"/><path d="M12 12 L1.6 18 A12 12 0 0 0 18 22.4Z" fill="#0f9d58"/><path d="M12 12 L18 22.4 A12 12 0 0 0 23.6 8 Z" fill="#f4b400"/><circle cx="12" cy="12" r="5.5" fill="#fff"/><circle cx="12" cy="12" r="4.3" fill="#4285f4"/></svg>
<svg class="abs" style="left:241px;top:1044px" width="23" height="24" viewBox="0 0 23 24"><ellipse cx="11.5" cy="12" rx="11.5" ry="12" fill="#e01020"/><ellipse cx="11.5" cy="12" rx="5" ry="8.5" fill="#1a2050"/></svg>
<svg class="abs" style="left:287px;top:1044px" width="23" height="24" viewBox="0 0 23 24"><path d="M10 1 L19 6 V17 L10 22 L1 17 V6Z" fill="#8a9098"/><path d="M10 4 L16 7.5 L10 11 L4 7.5Z" fill="#dfe3e8"/><path d="M3.5 9 L9 12 V19 L3.5 16Z" fill="#e8ecf0"/><path d="M11 12 L16.5 9 V16 L11 19Z" fill="#c8ccd2"/><path d="M10 7 L13 8.5 L10 10 L7 8.5Z" fill="#8a9098"/><text x="13" y="22.5" font-family="Liberation Sans" font-weight="bold" font-style="italic" font-size="12" fill="#e8ecf0" stroke="#20242e" stroke-width="0.6">6</text></svg>
<div class="abs" style="left:321px;top:1036px;width:39px;height:40px;background:rgba(255,255,255,0.06);border:1px solid rgba(255,255,255,0.04);border-radius:4px"></div>
<svg class="abs" style="left:329px;top:1044px" width="24" height="24" viewBox="0 0 24 24"><path d="M17.5 0.5 L23.5 3 V21 L17.5 23.5 L6.5 13.5 L2.5 16.5 L0.5 15.5 V8.5 L2.5 7.5 L6.5 10.5Z" fill="#8c52d8"/><path d="M17.5 6.5 L10.5 12 L17.5 17.5Z M2.5 10 V14 L4.8 12Z" fill="#1f2540"/><path d="M17.5 0.5 L23.5 3 V21 L17.5 23.5Z" fill="#b888f4"/><path d="M0.5 8.5 L2.5 7.5 L17.5 19 V23.5 Z" fill="#6f3cc0" opacity="0.7"/></svg>
<div class="abs" style="left:333px;top:1072px;width:16px;height:3px;background:#60c8f8;border-radius:2px;"></div>
<svg class="abs" style="left:373px;top:1044px" width="25" height="24" viewBox="0 0 25 24"><rect x="0" y="10" width="25" height="13" fill="#0a1430"/><path d="M2 23 Q4 14 12 15 Q16 16 18 23Z" fill="#2a6ae0"/><path d="M10 2 L12 5 L20 4 L22 0 L24 3 V14 L16 18 L11 14 L8 10 L6 8 L9 6Z" fill="#d8dce0"/><circle cx="13" cy="8" r="1.6" fill="#102040"/><circle cx="18" cy="8" r="1.6" fill="#102040"/><rect x="0" y="22.5" width="25" height="1" fill="#a09040"/></svg>
<svg class="abs" style="left:416px;top:1044px" width="25" height="24" viewBox="0 0 25 24"><rect x="0" y="0" width="25" height="24" rx="3" fill="#7cc4ec"/><path d="M0 15 Q10 12 25 14 V21 Q25 24 22 24 H3 Q0 24 0 21Z" fill="#78c050"/><rect x="1" y="6" width="6" height="12" fill="#d8c090"/><path d="M7 10 Q12 7 19 10 L21 17 Q15 21 8 18Z" fill="#f4f0f0"/><circle cx="17" cy="9" r="3" fill="#f0c8b8"/><path d="M14 2 L16 6 L18 2Z" fill="#f0d040"/><rect x="10" y="12" width="3" height="3" fill="#333"/></svg>
<div class="abs" style="left:206px;top:1073px;width:6px;height:2px;background:#9aa0aa;border-radius:1px;"></div>
<div class="abs" style="left:250px;top:1073px;width:6px;height:2px;background:#9aa0aa;border-radius:1px;"></div>
<div class="abs" style="left:294px;top:1073px;width:6px;height:2px;background:#9aa0aa;border-radius:1px;"></div>
<div class="abs" style="left:383px;top:1073px;width:6px;height:2px;background:#9aa0aa;border-radius:1px;"></div>
<div class="abs" style="left:426px;top:1073px;width:6px;height:2px;background:#9aa0aa;border-radius:1px;"></div>
<svg class="abs" style="left:879px;top:1048px" width="18" height="23" viewBox="0 0 18 23"><rect x="1" y="0" width="17" height="21" fill="#8a4a38" stroke="#3a1a10" stroke-width="1"/><rect x="0" y="19" width="18" height="3" fill="#f0e0c0"/><rect x="0" y="0" width="2" height="22" fill="#5a2a1c"/></svg>
<div class="abs" style="left:905px;top:1043px;width:123px;height:32px;background:#eebd8b;border:2px solid #141414;border-radius:3px;"></div>
<svg class="abs" style="left:914px;top:1049px" width="20" height="20" viewBox="0 0 20 20"><circle cx="10" cy="10" r="9" fill="#f8c848" stroke="#141414" stroke-width="1.8"/><text x="6" y="15" font-family="Liberation Sans" font-size="12" fill="#a07020">G</text></svg>
<div class="abs" style="left:940px;top:1049px;width:81px;height:21px;background:#3a281a;"></div>
<svg class="abs" style="left:970.5px;top:1053.3px;overflow:visible" width="46.50" height="11.70" viewBox="0 0 28 7" preserveAspectRatio="none"><path d="M1 0h2v1h-2zM0 1h3v1h-3zM1 2h2v1h-2zM1 3h2v1h-2zM1 4h2v1h-2zM1 5h2v1h-2zM0 6h4v1h-4zM5 0h6v1h-6zM5 1h7v1h-7zM10 2h2v1h-2zM7 3h5v1h-5zM10 4h2v1h-2zM5 5h7v1h-7zM5 6h6v1h-6zM13 0h6v1h-6zM13 1h7v1h-7zM18 2h2v1h-2zM14 3h6v1h-6zM13 4h2v1h-2zM13 5h7v1h-7zM13 6h7v1h-7zM22 0h5v1h-5zM21 1h7v1h-7zM21 2h2v1h-2zM25 2h3v1h-3zM21 3h2v1h-2zM24 3h1v1h-1zM26 3h2v1h-2zM21 4h3v1h-3zM26 4h2v1h-2zM21 5h7v1h-7zM22 6h5v1h-5z" fill="#f0f000"/></svg>
<svg class="abs" style="left:1664px;top:1052px" width="12" height="7" viewBox="0 0 12 7"><path d="M0.8 6.2 L6 1 L11.2 6.2" fill="none" stroke="#f0f0f0" stroke-width="1.4"/></svg>
<svg class="abs" style="left:1694px;top:1049px" width="17" height="16" viewBox="0 0 17 16"><circle cx="9" cy="8" r="8" fill="#1a5ab0"/><circle cx="11" cy="5.5" r="3" fill="none" stroke="#fff" stroke-width="1.4"/><path d="M0 8 L6 11 Q8 12 10 9" fill="none" stroke="#fff" stroke-width="2"/><circle cx="6" cy="11" r="2" fill="#fff"/></svg>
<svg class="abs" style="left:1726px;top:1048px" width="15" height="16" viewBox="0 0 15 16"><path d="M7.5 1 L14 4.5 V11.5 L7.5 15 L1 11.5 V4.5Z" fill="#9098a0"/><path d="M7.5 5 L10.5 6.5 V9.5 L7.5 11 L4.5 9.5 V6.5Z" fill="#5a6068"/></svg>
<svg class="abs" style="left:1758px;top:1048px" width="16" height="16" viewBox="0 0 16 16"><path d="M9 3.5 H0.5 V11.5 H9 M4.5 11.5 V14.5 M2 14.5 H8" fill="none" stroke="#f0f0f0" stroke-width="1.2"/><rect x="12" y="0.5" width="3" height="4" fill="none" stroke="#f0f0f0"/><path d="M13.5 4.5 V15.5" stroke="#f0f0f0" stroke-width="1.2"/></svg>
<svg class="abs" style="left:1782px;top:1049px" width="17" height="15" viewBox="0 0 17 15"><path d="M0.5 5 H3.5 L7.5 1 V14 L3.5 10 H0.5Z" fill="none" stroke="#f0f0f0" stroke-width="1.1"/><path d="M10 4.5 Q11.5 7.5 10 10.5 M12.5 2.5 Q15 7.5 12.5 12.5 M14.5 0.8 Q18 7.5 14.5 14.2" fill="none" stroke="#f0f0f0" stroke-width="1.1"/></svg>
<div class="t" style="left:1849px;top:1042.69px;font-size:11px;line-height:11px;color:#f0f0f0;transform:scaleX(1.0108);transform-origin:0 0;">11:41</div>
<div class="t" style="left:1816px;top:1058.69px;font-size:11px;line-height:11px;color:#f0f0f0;transform:scaleX(1.1247);transform-origin:0 0;">13/11/2024</div>
<svg class="abs" style="left:1885px;top:1049px" width="15" height="16" viewBox="0 0 15 16"><path d="M6 2 Q1 3 1.5 9 L0 12 H12 L10.5 9 V7" fill="#f0f0f0"/><rect x="4" y="12.5" width="4" height="2.5" fill="#f0f0f0"/><path d="M9 1 H13 L9 5 H13" fill="none" stroke="#f0f0f0" stroke-width="1.1"/><path d="M4 6 H7 L4 9.5 H7" fill="none" stroke="#1b1e2a" stroke-width="1"/></svg>
</body></html>
